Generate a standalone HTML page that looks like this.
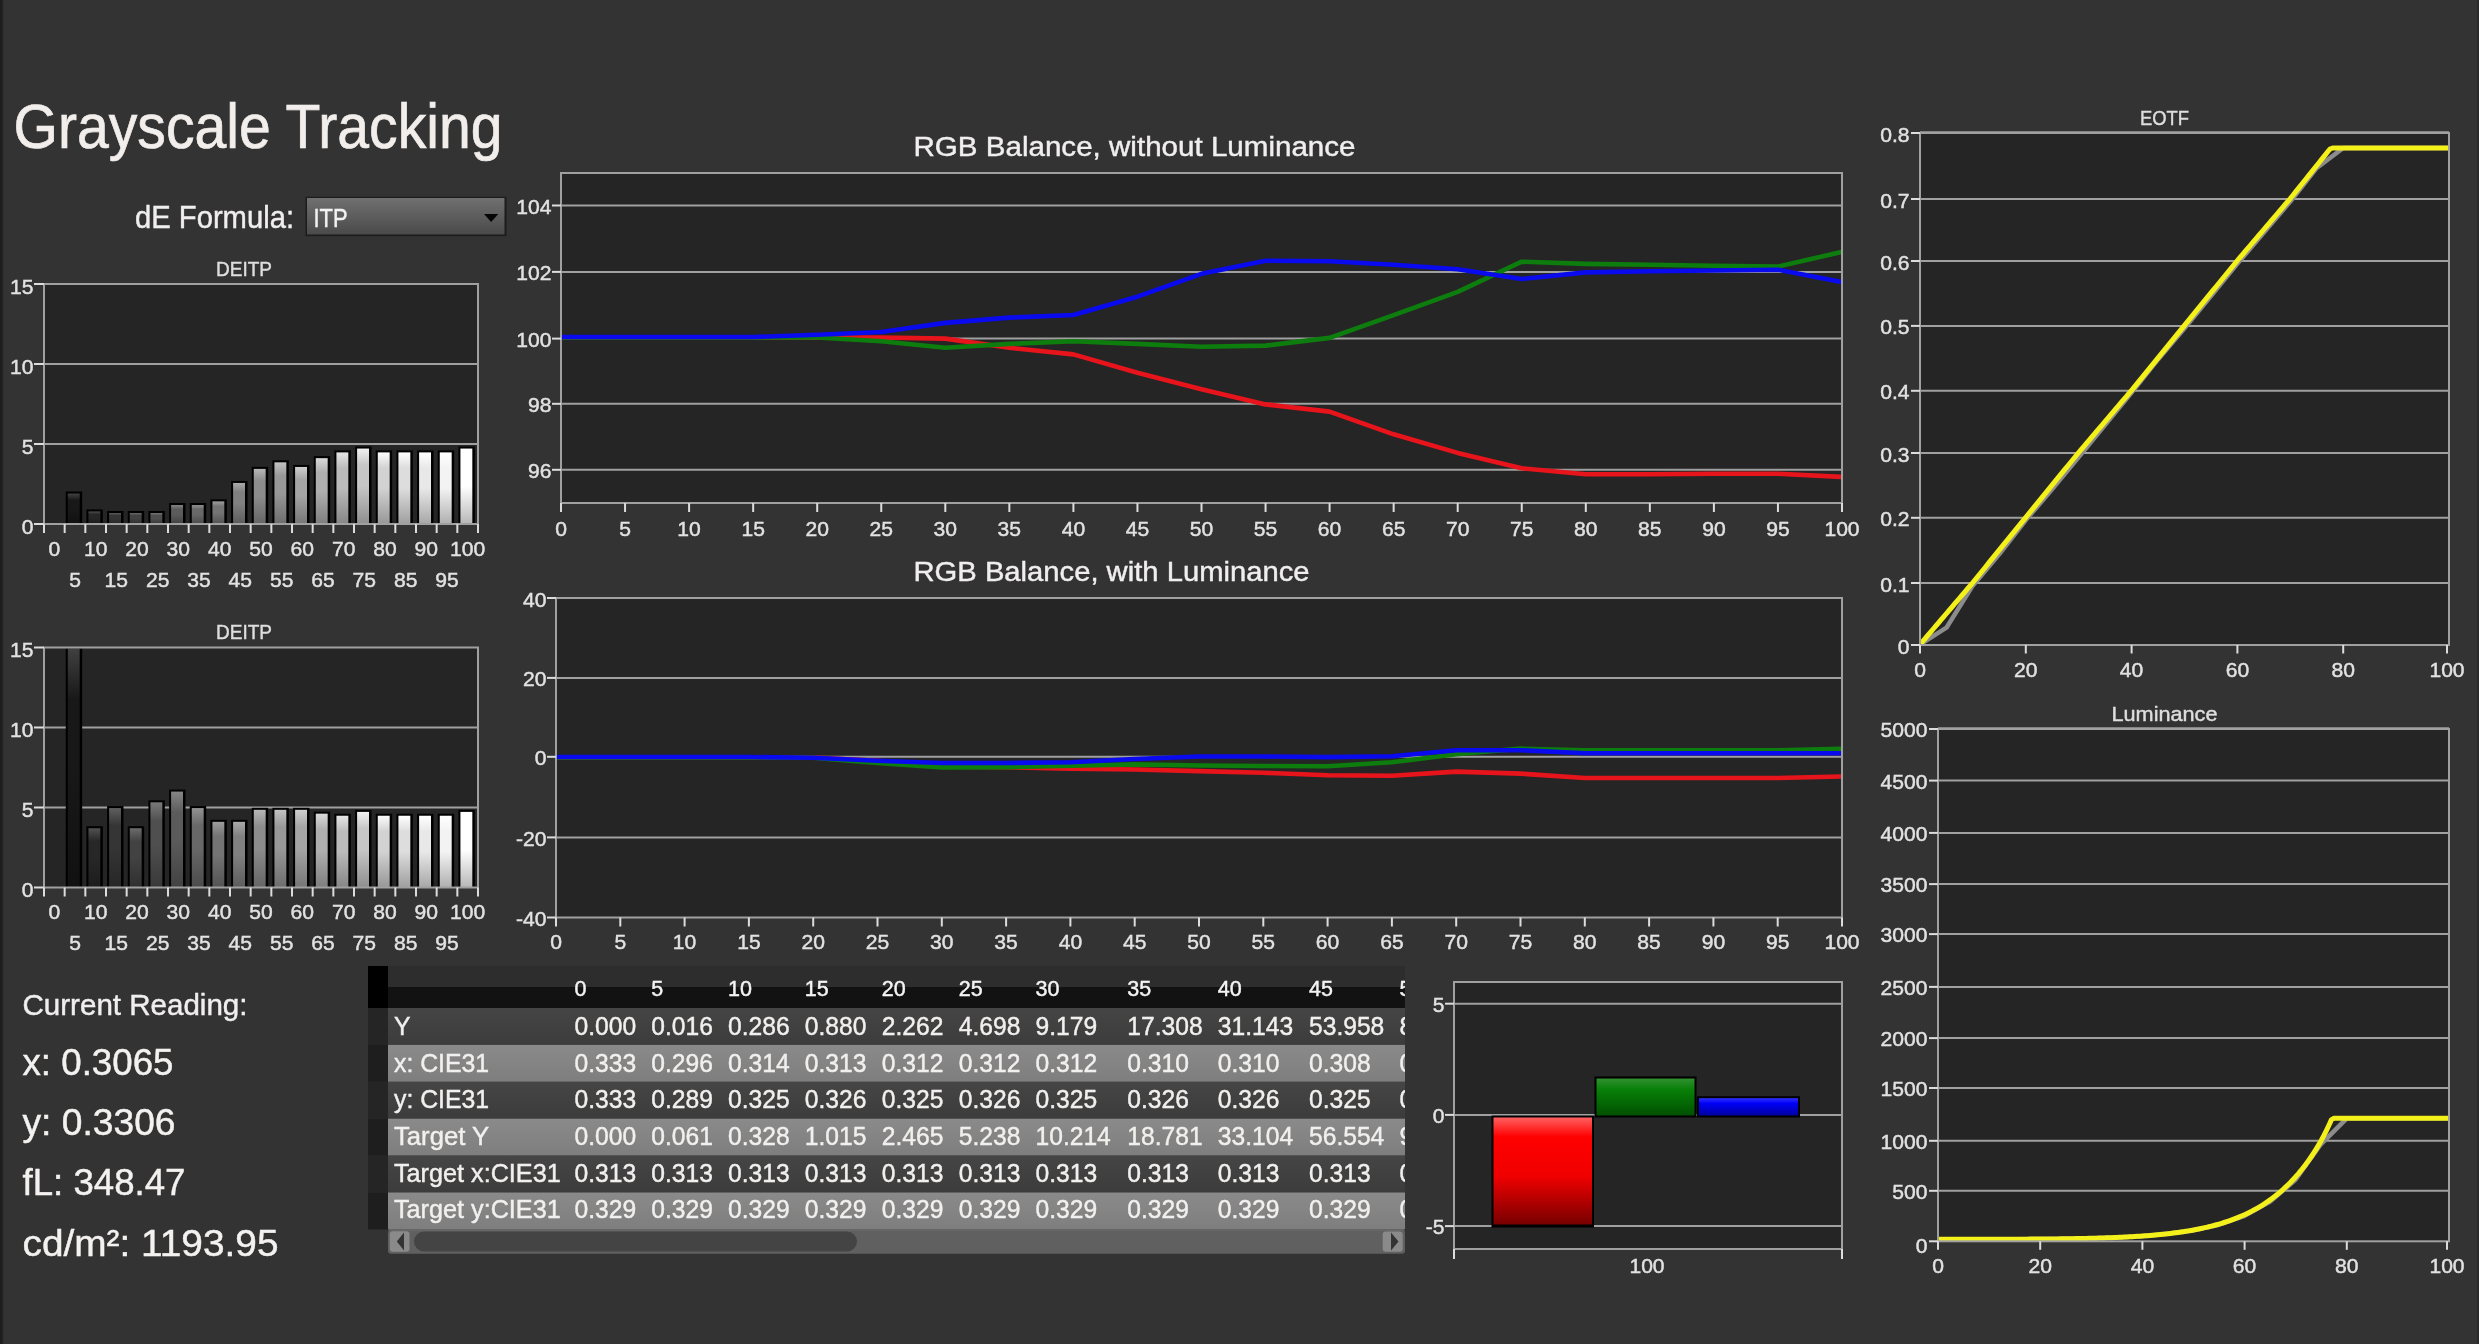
<!DOCTYPE html>
<html><head><meta charset="utf-8"><title>Grayscale Tracking</title>
<style>
html,body{margin:0;padding:0;background:#333333;overflow:hidden;}
svg{display:block;will-change:transform;}
text{font-family:"Liberation Sans", sans-serif;}
</style></head><body>
<svg width="2479" height="1344" viewBox="0 0 2479 1344">
<defs><linearGradient id="lstrip" x1="0" x2="1" y1="0" y2="0"><stop offset="0" stop-color="#1c1c1c"/><stop offset="0.45" stop-color="#1e1e1e"/><stop offset="1" stop-color="#333333"/></linearGradient>
<linearGradient id="ddg" x1="0" x2="0" y1="0" y2="1"><stop offset="0" stop-color="#707070"/><stop offset="1" stop-color="#4a4a4a"/></linearGradient>
<clipPath id="bclip284"><rect x="44.00" y="285.00" width="434.00" height="239.00"/></clipPath>
<linearGradient id="bg284_1" x1="0" x2="0" y1="0" y2="1"><stop offset="0" stop-color="rgb(66,66,66)"/><stop offset="0.22" stop-color="rgb(24,24,24)"/><stop offset="0.5" stop-color="rgb(24,24,24)"/><stop offset="1" stop-color="rgb(17,17,17)"/></linearGradient>
<linearGradient id="bg284_2" x1="0" x2="0" y1="0" y2="1"><stop offset="0" stop-color="rgb(81,81,81)"/><stop offset="0.22" stop-color="rgb(39,39,39)"/><stop offset="0.5" stop-color="rgb(39,39,39)"/><stop offset="1" stop-color="rgb(28,28,28)"/></linearGradient>
<linearGradient id="bg284_3" x1="0" x2="0" y1="0" y2="1"><stop offset="0" stop-color="rgb(95,95,95)"/><stop offset="0.22" stop-color="rgb(53,53,53)"/><stop offset="0.5" stop-color="rgb(53,53,53)"/><stop offset="1" stop-color="rgb(38,38,38)"/></linearGradient>
<linearGradient id="bg284_4" x1="0" x2="0" y1="0" y2="1"><stop offset="0" stop-color="rgb(108,108,108)"/><stop offset="0.22" stop-color="rgb(66,66,66)"/><stop offset="0.5" stop-color="rgb(66,66,66)"/><stop offset="1" stop-color="rgb(47,47,47)"/></linearGradient>
<linearGradient id="bg284_5" x1="0" x2="0" y1="0" y2="1"><stop offset="0" stop-color="rgb(121,121,121)"/><stop offset="0.22" stop-color="rgb(79,79,79)"/><stop offset="0.5" stop-color="rgb(79,79,79)"/><stop offset="1" stop-color="rgb(57,57,57)"/></linearGradient>
<linearGradient id="bg284_6" x1="0" x2="0" y1="0" y2="1"><stop offset="0" stop-color="rgb(133,133,133)"/><stop offset="0.22" stop-color="rgb(91,91,91)"/><stop offset="0.5" stop-color="rgb(91,91,91)"/><stop offset="1" stop-color="rgb(66,66,66)"/></linearGradient>
<linearGradient id="bg284_7" x1="0" x2="0" y1="0" y2="1"><stop offset="0" stop-color="rgb(146,146,146)"/><stop offset="0.22" stop-color="rgb(104,104,104)"/><stop offset="0.5" stop-color="rgb(104,104,104)"/><stop offset="1" stop-color="rgb(75,75,75)"/></linearGradient>
<linearGradient id="bg284_8" x1="0" x2="0" y1="0" y2="1"><stop offset="0" stop-color="rgb(158,158,158)"/><stop offset="0.22" stop-color="rgb(116,116,116)"/><stop offset="0.5" stop-color="rgb(116,116,116)"/><stop offset="1" stop-color="rgb(83,83,83)"/></linearGradient>
<linearGradient id="bg284_9" x1="0" x2="0" y1="0" y2="1"><stop offset="0" stop-color="rgb(170,170,170)"/><stop offset="0.22" stop-color="rgb(128,128,128)"/><stop offset="0.5" stop-color="rgb(128,128,128)"/><stop offset="1" stop-color="rgb(92,92,92)"/></linearGradient>
<linearGradient id="bg284_10" x1="0" x2="0" y1="0" y2="1"><stop offset="0" stop-color="rgb(182,182,182)"/><stop offset="0.22" stop-color="rgb(140,140,140)"/><stop offset="0.5" stop-color="rgb(140,140,140)"/><stop offset="1" stop-color="rgb(101,101,101)"/></linearGradient>
<linearGradient id="bg284_11" x1="0" x2="0" y1="0" y2="1"><stop offset="0" stop-color="rgb(194,194,194)"/><stop offset="0.22" stop-color="rgb(152,152,152)"/><stop offset="0.5" stop-color="rgb(152,152,152)"/><stop offset="1" stop-color="rgb(109,109,109)"/></linearGradient>
<linearGradient id="bg284_12" x1="0" x2="0" y1="0" y2="1"><stop offset="0" stop-color="rgb(206,206,206)"/><stop offset="0.22" stop-color="rgb(164,164,164)"/><stop offset="0.5" stop-color="rgb(164,164,164)"/><stop offset="1" stop-color="rgb(118,118,118)"/></linearGradient>
<linearGradient id="bg284_13" x1="0" x2="0" y1="0" y2="1"><stop offset="0" stop-color="rgb(217,217,217)"/><stop offset="0.22" stop-color="rgb(175,175,175)"/><stop offset="0.5" stop-color="rgb(175,175,175)"/><stop offset="1" stop-color="rgb(126,126,126)"/></linearGradient>
<linearGradient id="bg284_14" x1="0" x2="0" y1="0" y2="1"><stop offset="0" stop-color="rgb(229,229,229)"/><stop offset="0.22" stop-color="rgb(187,187,187)"/><stop offset="0.5" stop-color="rgb(187,187,187)"/><stop offset="1" stop-color="rgb(134,134,134)"/></linearGradient>
<linearGradient id="bg284_15" x1="0" x2="0" y1="0" y2="1"><stop offset="0" stop-color="rgb(240,240,240)"/><stop offset="0.22" stop-color="rgb(198,198,198)"/><stop offset="0.5" stop-color="rgb(198,198,198)"/><stop offset="1" stop-color="rgb(143,143,143)"/></linearGradient>
<linearGradient id="bg284_16" x1="0" x2="0" y1="0" y2="1"><stop offset="0" stop-color="rgb(252,252,252)"/><stop offset="0.22" stop-color="rgb(210,210,210)"/><stop offset="0.5" stop-color="rgb(210,210,210)"/><stop offset="1" stop-color="rgb(151,151,151)"/></linearGradient>
<linearGradient id="bg284_17" x1="0" x2="0" y1="0" y2="1"><stop offset="0" stop-color="rgb(255,255,255)"/><stop offset="0.22" stop-color="rgb(221,221,221)"/><stop offset="0.5" stop-color="rgb(221,221,221)"/><stop offset="1" stop-color="rgb(159,159,159)"/></linearGradient>
<linearGradient id="bg284_18" x1="0" x2="0" y1="0" y2="1"><stop offset="0" stop-color="rgb(255,255,255)"/><stop offset="0.22" stop-color="rgb(232,232,232)"/><stop offset="0.5" stop-color="rgb(232,232,232)"/><stop offset="1" stop-color="rgb(167,167,167)"/></linearGradient>
<linearGradient id="bg284_19" x1="0" x2="0" y1="0" y2="1"><stop offset="0" stop-color="rgb(255,255,255)"/><stop offset="0.22" stop-color="rgb(243,243,243)"/><stop offset="0.5" stop-color="rgb(243,243,243)"/><stop offset="1" stop-color="rgb(175,175,175)"/></linearGradient>
<linearGradient id="bg284_20" x1="0" x2="0" y1="0" y2="1"><stop offset="0" stop-color="rgb(255,255,255)"/><stop offset="0.22" stop-color="rgb(255,255,255)"/><stop offset="0.5" stop-color="rgb(255,255,255)"/><stop offset="1" stop-color="rgb(183,183,183)"/></linearGradient>
<clipPath id="bclip647"><rect x="44.00" y="648.50" width="434.00" height="239.00"/></clipPath>
<linearGradient id="bg647_1" x1="0" x2="0" y1="0" y2="1"><stop offset="0" stop-color="rgb(66,66,66)"/><stop offset="0.22" stop-color="rgb(24,24,24)"/><stop offset="0.5" stop-color="rgb(24,24,24)"/><stop offset="1" stop-color="rgb(17,17,17)"/></linearGradient>
<linearGradient id="bg647_2" x1="0" x2="0" y1="0" y2="1"><stop offset="0" stop-color="rgb(81,81,81)"/><stop offset="0.22" stop-color="rgb(39,39,39)"/><stop offset="0.5" stop-color="rgb(39,39,39)"/><stop offset="1" stop-color="rgb(28,28,28)"/></linearGradient>
<linearGradient id="bg647_3" x1="0" x2="0" y1="0" y2="1"><stop offset="0" stop-color="rgb(95,95,95)"/><stop offset="0.22" stop-color="rgb(53,53,53)"/><stop offset="0.5" stop-color="rgb(53,53,53)"/><stop offset="1" stop-color="rgb(38,38,38)"/></linearGradient>
<linearGradient id="bg647_4" x1="0" x2="0" y1="0" y2="1"><stop offset="0" stop-color="rgb(108,108,108)"/><stop offset="0.22" stop-color="rgb(66,66,66)"/><stop offset="0.5" stop-color="rgb(66,66,66)"/><stop offset="1" stop-color="rgb(47,47,47)"/></linearGradient>
<linearGradient id="bg647_5" x1="0" x2="0" y1="0" y2="1"><stop offset="0" stop-color="rgb(121,121,121)"/><stop offset="0.22" stop-color="rgb(79,79,79)"/><stop offset="0.5" stop-color="rgb(79,79,79)"/><stop offset="1" stop-color="rgb(57,57,57)"/></linearGradient>
<linearGradient id="bg647_6" x1="0" x2="0" y1="0" y2="1"><stop offset="0" stop-color="rgb(133,133,133)"/><stop offset="0.22" stop-color="rgb(91,91,91)"/><stop offset="0.5" stop-color="rgb(91,91,91)"/><stop offset="1" stop-color="rgb(66,66,66)"/></linearGradient>
<linearGradient id="bg647_7" x1="0" x2="0" y1="0" y2="1"><stop offset="0" stop-color="rgb(146,146,146)"/><stop offset="0.22" stop-color="rgb(104,104,104)"/><stop offset="0.5" stop-color="rgb(104,104,104)"/><stop offset="1" stop-color="rgb(75,75,75)"/></linearGradient>
<linearGradient id="bg647_8" x1="0" x2="0" y1="0" y2="1"><stop offset="0" stop-color="rgb(158,158,158)"/><stop offset="0.22" stop-color="rgb(116,116,116)"/><stop offset="0.5" stop-color="rgb(116,116,116)"/><stop offset="1" stop-color="rgb(83,83,83)"/></linearGradient>
<linearGradient id="bg647_9" x1="0" x2="0" y1="0" y2="1"><stop offset="0" stop-color="rgb(170,170,170)"/><stop offset="0.22" stop-color="rgb(128,128,128)"/><stop offset="0.5" stop-color="rgb(128,128,128)"/><stop offset="1" stop-color="rgb(92,92,92)"/></linearGradient>
<linearGradient id="bg647_10" x1="0" x2="0" y1="0" y2="1"><stop offset="0" stop-color="rgb(182,182,182)"/><stop offset="0.22" stop-color="rgb(140,140,140)"/><stop offset="0.5" stop-color="rgb(140,140,140)"/><stop offset="1" stop-color="rgb(101,101,101)"/></linearGradient>
<linearGradient id="bg647_11" x1="0" x2="0" y1="0" y2="1"><stop offset="0" stop-color="rgb(194,194,194)"/><stop offset="0.22" stop-color="rgb(152,152,152)"/><stop offset="0.5" stop-color="rgb(152,152,152)"/><stop offset="1" stop-color="rgb(109,109,109)"/></linearGradient>
<linearGradient id="bg647_12" x1="0" x2="0" y1="0" y2="1"><stop offset="0" stop-color="rgb(206,206,206)"/><stop offset="0.22" stop-color="rgb(164,164,164)"/><stop offset="0.5" stop-color="rgb(164,164,164)"/><stop offset="1" stop-color="rgb(118,118,118)"/></linearGradient>
<linearGradient id="bg647_13" x1="0" x2="0" y1="0" y2="1"><stop offset="0" stop-color="rgb(217,217,217)"/><stop offset="0.22" stop-color="rgb(175,175,175)"/><stop offset="0.5" stop-color="rgb(175,175,175)"/><stop offset="1" stop-color="rgb(126,126,126)"/></linearGradient>
<linearGradient id="bg647_14" x1="0" x2="0" y1="0" y2="1"><stop offset="0" stop-color="rgb(229,229,229)"/><stop offset="0.22" stop-color="rgb(187,187,187)"/><stop offset="0.5" stop-color="rgb(187,187,187)"/><stop offset="1" stop-color="rgb(134,134,134)"/></linearGradient>
<linearGradient id="bg647_15" x1="0" x2="0" y1="0" y2="1"><stop offset="0" stop-color="rgb(240,240,240)"/><stop offset="0.22" stop-color="rgb(198,198,198)"/><stop offset="0.5" stop-color="rgb(198,198,198)"/><stop offset="1" stop-color="rgb(143,143,143)"/></linearGradient>
<linearGradient id="bg647_16" x1="0" x2="0" y1="0" y2="1"><stop offset="0" stop-color="rgb(252,252,252)"/><stop offset="0.22" stop-color="rgb(210,210,210)"/><stop offset="0.5" stop-color="rgb(210,210,210)"/><stop offset="1" stop-color="rgb(151,151,151)"/></linearGradient>
<linearGradient id="bg647_17" x1="0" x2="0" y1="0" y2="1"><stop offset="0" stop-color="rgb(255,255,255)"/><stop offset="0.22" stop-color="rgb(221,221,221)"/><stop offset="0.5" stop-color="rgb(221,221,221)"/><stop offset="1" stop-color="rgb(159,159,159)"/></linearGradient>
<linearGradient id="bg647_18" x1="0" x2="0" y1="0" y2="1"><stop offset="0" stop-color="rgb(255,255,255)"/><stop offset="0.22" stop-color="rgb(232,232,232)"/><stop offset="0.5" stop-color="rgb(232,232,232)"/><stop offset="1" stop-color="rgb(167,167,167)"/></linearGradient>
<linearGradient id="bg647_19" x1="0" x2="0" y1="0" y2="1"><stop offset="0" stop-color="rgb(255,255,255)"/><stop offset="0.22" stop-color="rgb(243,243,243)"/><stop offset="0.5" stop-color="rgb(243,243,243)"/><stop offset="1" stop-color="rgb(175,175,175)"/></linearGradient>
<linearGradient id="bg647_20" x1="0" x2="0" y1="0" y2="1"><stop offset="0" stop-color="rgb(255,255,255)"/><stop offset="0.22" stop-color="rgb(255,255,255)"/><stop offset="0.5" stop-color="rgb(255,255,255)"/><stop offset="1" stop-color="rgb(183,183,183)"/></linearGradient>
<clipPath id="clip173"><rect x="562.00" y="174.00" width="1279.00" height="328.00"/></clipPath>
<clipPath id="clip598"><rect x="557.00" y="599.00" width="1284.00" height="317.50"/></clipPath>
<clipPath id="eclip"><rect x="1921.00" y="134.00" width="527.00" height="511.00"/></clipPath>
<clipPath id="lclip"><rect x="1939.00" y="730.00" width="509.00" height="511.30"/></clipPath>
<linearGradient id="rg" x1="0" x2="0" y1="0" y2="1"><stop offset="0" stop-color="#ff6060"/><stop offset="0.18" stop-color="#ff0000"/><stop offset="0.55" stop-color="#f00000"/><stop offset="1" stop-color="#780000"/></linearGradient>
<linearGradient id="gg" x1="0" x2="0" y1="0" y2="1"><stop offset="0" stop-color="#309030"/><stop offset="0.3" stop-color="#088008"/><stop offset="1" stop-color="#005000"/></linearGradient>
<linearGradient id="bbg" x1="0" x2="0" y1="0" y2="1"><stop offset="0" stop-color="#3030ff"/><stop offset="0.3" stop-color="#0000f8"/><stop offset="1" stop-color="#0000a0"/></linearGradient>
<clipPath id="tclip"><rect x="388" y="960" width="1017" height="300"/></clipPath>
<linearGradient id="rowd" x1="0" x2="0" y1="0" y2="1"><stop offset="0" stop-color="#454545"/><stop offset="1" stop-color="#3c3c3c"/></linearGradient>
<linearGradient id="rowl" x1="0" x2="0" y1="0" y2="1"><stop offset="0" stop-color="#8a8a8a"/><stop offset="1" stop-color="#7e7e7e"/></linearGradient></defs>
<rect x="0.00" y="0.00" width="2479.00" height="1344.00" fill="#333333"/>
<rect x="0.00" y="0.00" width="4.00" height="1344.00" fill="url(#lstrip)"/>
<rect x="2477.00" y="0.00" width="2.00" height="1344.00" fill="#2a2a2a"/>
<text x="13.50" y="148.30" font-size="62.50" fill="#f2eeec" text-anchor="start" textLength="489.0" lengthAdjust="spacingAndGlyphs" stroke="#f2eeec" stroke-width="0.70">Grayscale Tracking</text>
<text x="135.00" y="228.00" font-size="31.98" fill="#f0eeee" text-anchor="start" textLength="159.0" lengthAdjust="spacingAndGlyphs" stroke="#f0eeee" stroke-width="0.45">dE Formula:</text>
<rect x="305.50" y="196.80" width="201.00" height="39.30" fill="#1c1c1c"/>
<rect x="307.00" y="198.00" width="197.50" height="36.50" fill="url(#ddg)"/>
<text x="313.50" y="226.50" font-size="25.44" fill="#f2f2f2" text-anchor="start" textLength="34.0" lengthAdjust="spacingAndGlyphs" stroke="#f2f2f2" stroke-width="0.45">ITP</text>
<polygon points="484,214 498.3,214 491.1,222" fill="#050505"/>
<rect x="44.00" y="284.00" width="434.00" height="240.00" fill="#252525"/>
<line x1="44.00" y1="444.00" x2="478.00" y2="444.00" stroke="#a0a0a0" stroke-width="2.00"/>
<line x1="44.00" y1="364.00" x2="478.00" y2="364.00" stroke="#a0a0a0" stroke-width="2.00"/>
<g clip-path="url(#bclip284)">
<rect x="65.77" y="491.52" width="16.40" height="32.48" fill="#000000"/>
<rect x="67.77" y="493.52" width="11.90" height="30.48" fill="url(#bg284_1)"/>
<rect x="86.43" y="509.44" width="16.40" height="14.56" fill="#000000"/>
<rect x="88.43" y="511.44" width="11.90" height="12.56" fill="url(#bg284_2)"/>
<rect x="107.10" y="511.04" width="16.40" height="12.96" fill="#000000"/>
<rect x="109.10" y="513.04" width="11.90" height="10.96" fill="url(#bg284_3)"/>
<rect x="127.77" y="511.04" width="16.40" height="12.96" fill="#000000"/>
<rect x="129.77" y="513.04" width="11.90" height="10.96" fill="url(#bg284_4)"/>
<rect x="148.43" y="511.04" width="16.40" height="12.96" fill="#000000"/>
<rect x="150.43" y="513.04" width="11.90" height="10.96" fill="url(#bg284_5)"/>
<rect x="169.10" y="503.04" width="16.40" height="20.96" fill="#000000"/>
<rect x="171.10" y="505.04" width="11.90" height="18.96" fill="url(#bg284_6)"/>
<rect x="189.77" y="503.04" width="16.40" height="20.96" fill="#000000"/>
<rect x="191.77" y="505.04" width="11.90" height="18.96" fill="url(#bg284_7)"/>
<rect x="210.43" y="499.36" width="16.40" height="24.64" fill="#000000"/>
<rect x="212.43" y="501.36" width="11.90" height="22.64" fill="url(#bg284_8)"/>
<rect x="231.10" y="480.96" width="16.40" height="43.04" fill="#000000"/>
<rect x="233.10" y="482.96" width="11.90" height="41.04" fill="url(#bg284_9)"/>
<rect x="251.77" y="466.88" width="16.40" height="57.12" fill="#000000"/>
<rect x="253.77" y="468.88" width="11.90" height="55.12" fill="url(#bg284_10)"/>
<rect x="272.43" y="460.32" width="16.40" height="63.68" fill="#000000"/>
<rect x="274.43" y="462.32" width="11.90" height="61.68" fill="url(#bg284_11)"/>
<rect x="293.10" y="464.96" width="16.40" height="59.04" fill="#000000"/>
<rect x="295.10" y="466.96" width="11.90" height="57.04" fill="url(#bg284_12)"/>
<rect x="313.77" y="456.16" width="16.40" height="67.84" fill="#000000"/>
<rect x="315.77" y="458.16" width="11.90" height="65.84" fill="url(#bg284_13)"/>
<rect x="334.43" y="450.40" width="16.40" height="73.60" fill="#000000"/>
<rect x="336.43" y="452.40" width="11.90" height="71.60" fill="url(#bg284_14)"/>
<rect x="355.10" y="446.56" width="16.40" height="77.44" fill="#000000"/>
<rect x="357.10" y="448.56" width="11.90" height="75.44" fill="url(#bg284_15)"/>
<rect x="375.77" y="450.40" width="16.40" height="73.60" fill="#000000"/>
<rect x="377.77" y="452.40" width="11.90" height="71.60" fill="url(#bg284_16)"/>
<rect x="396.43" y="450.40" width="16.40" height="73.60" fill="#000000"/>
<rect x="398.43" y="452.40" width="11.90" height="71.60" fill="url(#bg284_17)"/>
<rect x="417.10" y="450.40" width="16.40" height="73.60" fill="#000000"/>
<rect x="419.10" y="452.40" width="11.90" height="71.60" fill="url(#bg284_18)"/>
<rect x="437.77" y="450.40" width="16.40" height="73.60" fill="#000000"/>
<rect x="439.77" y="452.40" width="11.90" height="71.60" fill="url(#bg284_19)"/>
<rect x="458.43" y="446.56" width="16.40" height="77.44" fill="#000000"/>
<rect x="460.43" y="448.56" width="11.90" height="75.44" fill="url(#bg284_20)"/>
</g>
<rect x="44.00" y="284.00" width="434.00" height="240.00" fill="none" stroke="#a0a0a0" stroke-width="2"/>
<line x1="34.00" y1="524.00" x2="44.00" y2="524.00" stroke="#dcdcdc" stroke-width="2.00"/>
<text x="33.50" y="533.50" font-size="21.08" fill="#e2e2e2" text-anchor="end" stroke="#e2e2e2" stroke-width="0.45">0</text>
<line x1="34.00" y1="444.00" x2="44.00" y2="444.00" stroke="#dcdcdc" stroke-width="2.00"/>
<text x="33.50" y="453.50" font-size="21.08" fill="#e2e2e2" text-anchor="end" stroke="#e2e2e2" stroke-width="0.45">5</text>
<line x1="34.00" y1="364.00" x2="44.00" y2="364.00" stroke="#dcdcdc" stroke-width="2.00"/>
<text x="33.50" y="373.50" font-size="21.08" fill="#e2e2e2" text-anchor="end" stroke="#e2e2e2" stroke-width="0.45">10</text>
<line x1="34.00" y1="284.00" x2="44.00" y2="284.00" stroke="#dcdcdc" stroke-width="2.00"/>
<text x="33.50" y="293.50" font-size="21.08" fill="#e2e2e2" text-anchor="end" stroke="#e2e2e2" stroke-width="0.45">15</text>
<line x1="44.00" y1="524.00" x2="44.00" y2="533.00" stroke="#dcdcdc" stroke-width="2.00"/>
<line x1="64.67" y1="524.00" x2="64.67" y2="533.00" stroke="#dcdcdc" stroke-width="2.00"/>
<line x1="85.33" y1="524.00" x2="85.33" y2="533.00" stroke="#dcdcdc" stroke-width="2.00"/>
<line x1="106.00" y1="524.00" x2="106.00" y2="533.00" stroke="#dcdcdc" stroke-width="2.00"/>
<line x1="126.67" y1="524.00" x2="126.67" y2="533.00" stroke="#dcdcdc" stroke-width="2.00"/>
<line x1="147.33" y1="524.00" x2="147.33" y2="533.00" stroke="#dcdcdc" stroke-width="2.00"/>
<line x1="168.00" y1="524.00" x2="168.00" y2="533.00" stroke="#dcdcdc" stroke-width="2.00"/>
<line x1="188.67" y1="524.00" x2="188.67" y2="533.00" stroke="#dcdcdc" stroke-width="2.00"/>
<line x1="209.33" y1="524.00" x2="209.33" y2="533.00" stroke="#dcdcdc" stroke-width="2.00"/>
<line x1="230.00" y1="524.00" x2="230.00" y2="533.00" stroke="#dcdcdc" stroke-width="2.00"/>
<line x1="250.67" y1="524.00" x2="250.67" y2="533.00" stroke="#dcdcdc" stroke-width="2.00"/>
<line x1="271.33" y1="524.00" x2="271.33" y2="533.00" stroke="#dcdcdc" stroke-width="2.00"/>
<line x1="292.00" y1="524.00" x2="292.00" y2="533.00" stroke="#dcdcdc" stroke-width="2.00"/>
<line x1="312.67" y1="524.00" x2="312.67" y2="533.00" stroke="#dcdcdc" stroke-width="2.00"/>
<line x1="333.33" y1="524.00" x2="333.33" y2="533.00" stroke="#dcdcdc" stroke-width="2.00"/>
<line x1="354.00" y1="524.00" x2="354.00" y2="533.00" stroke="#dcdcdc" stroke-width="2.00"/>
<line x1="374.67" y1="524.00" x2="374.67" y2="533.00" stroke="#dcdcdc" stroke-width="2.00"/>
<line x1="395.33" y1="524.00" x2="395.33" y2="533.00" stroke="#dcdcdc" stroke-width="2.00"/>
<line x1="416.00" y1="524.00" x2="416.00" y2="533.00" stroke="#dcdcdc" stroke-width="2.00"/>
<line x1="436.67" y1="524.00" x2="436.67" y2="533.00" stroke="#dcdcdc" stroke-width="2.00"/>
<line x1="457.33" y1="524.00" x2="457.33" y2="533.00" stroke="#dcdcdc" stroke-width="2.00"/>
<line x1="478.00" y1="524.00" x2="478.00" y2="533.00" stroke="#dcdcdc" stroke-width="2.00"/>
<text x="54.33" y="555.50" font-size="21.08" fill="#e2e2e2" text-anchor="middle" stroke="#e2e2e2" stroke-width="0.45">0</text>
<text x="75.00" y="586.50" font-size="21.08" fill="#e2e2e2" text-anchor="middle" stroke="#e2e2e2" stroke-width="0.45">5</text>
<text x="95.67" y="555.50" font-size="21.08" fill="#e2e2e2" text-anchor="middle" stroke="#e2e2e2" stroke-width="0.45">10</text>
<text x="116.33" y="586.50" font-size="21.08" fill="#e2e2e2" text-anchor="middle" stroke="#e2e2e2" stroke-width="0.45">15</text>
<text x="137.00" y="555.50" font-size="21.08" fill="#e2e2e2" text-anchor="middle" stroke="#e2e2e2" stroke-width="0.45">20</text>
<text x="157.67" y="586.50" font-size="21.08" fill="#e2e2e2" text-anchor="middle" stroke="#e2e2e2" stroke-width="0.45">25</text>
<text x="178.33" y="555.50" font-size="21.08" fill="#e2e2e2" text-anchor="middle" stroke="#e2e2e2" stroke-width="0.45">30</text>
<text x="199.00" y="586.50" font-size="21.08" fill="#e2e2e2" text-anchor="middle" stroke="#e2e2e2" stroke-width="0.45">35</text>
<text x="219.67" y="555.50" font-size="21.08" fill="#e2e2e2" text-anchor="middle" stroke="#e2e2e2" stroke-width="0.45">40</text>
<text x="240.33" y="586.50" font-size="21.08" fill="#e2e2e2" text-anchor="middle" stroke="#e2e2e2" stroke-width="0.45">45</text>
<text x="261.00" y="555.50" font-size="21.08" fill="#e2e2e2" text-anchor="middle" stroke="#e2e2e2" stroke-width="0.45">50</text>
<text x="281.67" y="586.50" font-size="21.08" fill="#e2e2e2" text-anchor="middle" stroke="#e2e2e2" stroke-width="0.45">55</text>
<text x="302.33" y="555.50" font-size="21.08" fill="#e2e2e2" text-anchor="middle" stroke="#e2e2e2" stroke-width="0.45">60</text>
<text x="323.00" y="586.50" font-size="21.08" fill="#e2e2e2" text-anchor="middle" stroke="#e2e2e2" stroke-width="0.45">65</text>
<text x="343.67" y="555.50" font-size="21.08" fill="#e2e2e2" text-anchor="middle" stroke="#e2e2e2" stroke-width="0.45">70</text>
<text x="364.33" y="586.50" font-size="21.08" fill="#e2e2e2" text-anchor="middle" stroke="#e2e2e2" stroke-width="0.45">75</text>
<text x="385.00" y="555.50" font-size="21.08" fill="#e2e2e2" text-anchor="middle" stroke="#e2e2e2" stroke-width="0.45">80</text>
<text x="405.67" y="586.50" font-size="21.08" fill="#e2e2e2" text-anchor="middle" stroke="#e2e2e2" stroke-width="0.45">85</text>
<text x="426.33" y="555.50" font-size="21.08" fill="#e2e2e2" text-anchor="middle" stroke="#e2e2e2" stroke-width="0.45">90</text>
<text x="447.00" y="586.50" font-size="21.08" fill="#e2e2e2" text-anchor="middle" stroke="#e2e2e2" stroke-width="0.45">95</text>
<text x="467.67" y="555.50" font-size="21.08" fill="#e2e2e2" text-anchor="middle" stroke="#e2e2e2" stroke-width="0.45">100</text>
<text x="244.00" y="275.50" font-size="20.35" fill="#dedede" text-anchor="middle" textLength="56.0" lengthAdjust="spacingAndGlyphs" stroke="#dedede" stroke-width="0.45">DEITP</text>
<rect x="44.00" y="647.50" width="434.00" height="240.00" fill="#252525"/>
<line x1="44.00" y1="807.50" x2="478.00" y2="807.50" stroke="#a0a0a0" stroke-width="2.00"/>
<line x1="44.00" y1="727.50" x2="478.00" y2="727.50" stroke="#a0a0a0" stroke-width="2.00"/>
<g clip-path="url(#bclip647)">
<rect x="65.77" y="644.50" width="16.40" height="243.00" fill="#000000"/>
<rect x="67.77" y="646.50" width="11.90" height="241.00" fill="url(#bg647_1)"/>
<rect x="86.43" y="826.22" width="16.40" height="61.28" fill="#000000"/>
<rect x="88.43" y="828.22" width="11.90" height="59.28" fill="url(#bg647_2)"/>
<rect x="107.10" y="806.06" width="16.40" height="81.44" fill="#000000"/>
<rect x="109.10" y="808.06" width="11.90" height="79.44" fill="url(#bg647_3)"/>
<rect x="127.77" y="826.22" width="16.40" height="61.28" fill="#000000"/>
<rect x="129.77" y="828.22" width="11.90" height="59.28" fill="url(#bg647_4)"/>
<rect x="148.43" y="800.30" width="16.40" height="87.20" fill="#000000"/>
<rect x="150.43" y="802.30" width="11.90" height="85.20" fill="url(#bg647_5)"/>
<rect x="169.10" y="789.58" width="16.40" height="97.92" fill="#000000"/>
<rect x="171.10" y="791.58" width="11.90" height="95.92" fill="url(#bg647_6)"/>
<rect x="189.77" y="806.06" width="16.40" height="81.44" fill="#000000"/>
<rect x="191.77" y="808.06" width="11.90" height="79.44" fill="url(#bg647_7)"/>
<rect x="210.43" y="819.82" width="16.40" height="67.68" fill="#000000"/>
<rect x="212.43" y="821.82" width="11.90" height="65.68" fill="url(#bg647_8)"/>
<rect x="231.10" y="819.82" width="16.40" height="67.68" fill="#000000"/>
<rect x="233.10" y="821.82" width="11.90" height="65.68" fill="url(#bg647_9)"/>
<rect x="251.77" y="807.82" width="16.40" height="79.68" fill="#000000"/>
<rect x="253.77" y="809.82" width="11.90" height="77.68" fill="url(#bg647_10)"/>
<rect x="272.43" y="807.82" width="16.40" height="79.68" fill="#000000"/>
<rect x="274.43" y="809.82" width="11.90" height="77.68" fill="url(#bg647_11)"/>
<rect x="293.10" y="807.82" width="16.40" height="79.68" fill="#000000"/>
<rect x="295.10" y="809.82" width="11.90" height="77.68" fill="url(#bg647_12)"/>
<rect x="313.77" y="811.66" width="16.40" height="75.84" fill="#000000"/>
<rect x="315.77" y="813.66" width="11.90" height="73.84" fill="url(#bg647_13)"/>
<rect x="334.43" y="813.74" width="16.40" height="73.76" fill="#000000"/>
<rect x="336.43" y="815.74" width="11.90" height="71.76" fill="url(#bg647_14)"/>
<rect x="355.10" y="809.90" width="16.40" height="77.60" fill="#000000"/>
<rect x="357.10" y="811.90" width="11.90" height="75.60" fill="url(#bg647_15)"/>
<rect x="375.77" y="813.74" width="16.40" height="73.76" fill="#000000"/>
<rect x="377.77" y="815.74" width="11.90" height="71.76" fill="url(#bg647_16)"/>
<rect x="396.43" y="813.74" width="16.40" height="73.76" fill="#000000"/>
<rect x="398.43" y="815.74" width="11.90" height="71.76" fill="url(#bg647_17)"/>
<rect x="417.10" y="813.74" width="16.40" height="73.76" fill="#000000"/>
<rect x="419.10" y="815.74" width="11.90" height="71.76" fill="url(#bg647_18)"/>
<rect x="437.77" y="813.74" width="16.40" height="73.76" fill="#000000"/>
<rect x="439.77" y="815.74" width="11.90" height="71.76" fill="url(#bg647_19)"/>
<rect x="458.43" y="809.90" width="16.40" height="77.60" fill="#000000"/>
<rect x="460.43" y="811.90" width="11.90" height="75.60" fill="url(#bg647_20)"/>
</g>
<rect x="44.00" y="647.50" width="434.00" height="240.00" fill="none" stroke="#a0a0a0" stroke-width="2"/>
<line x1="34.00" y1="887.50" x2="44.00" y2="887.50" stroke="#dcdcdc" stroke-width="2.00"/>
<text x="33.50" y="897.00" font-size="21.08" fill="#e2e2e2" text-anchor="end" stroke="#e2e2e2" stroke-width="0.45">0</text>
<line x1="34.00" y1="807.50" x2="44.00" y2="807.50" stroke="#dcdcdc" stroke-width="2.00"/>
<text x="33.50" y="817.00" font-size="21.08" fill="#e2e2e2" text-anchor="end" stroke="#e2e2e2" stroke-width="0.45">5</text>
<line x1="34.00" y1="727.50" x2="44.00" y2="727.50" stroke="#dcdcdc" stroke-width="2.00"/>
<text x="33.50" y="737.00" font-size="21.08" fill="#e2e2e2" text-anchor="end" stroke="#e2e2e2" stroke-width="0.45">10</text>
<line x1="34.00" y1="647.50" x2="44.00" y2="647.50" stroke="#dcdcdc" stroke-width="2.00"/>
<text x="33.50" y="657.00" font-size="21.08" fill="#e2e2e2" text-anchor="end" stroke="#e2e2e2" stroke-width="0.45">15</text>
<line x1="44.00" y1="887.50" x2="44.00" y2="896.50" stroke="#dcdcdc" stroke-width="2.00"/>
<line x1="64.67" y1="887.50" x2="64.67" y2="896.50" stroke="#dcdcdc" stroke-width="2.00"/>
<line x1="85.33" y1="887.50" x2="85.33" y2="896.50" stroke="#dcdcdc" stroke-width="2.00"/>
<line x1="106.00" y1="887.50" x2="106.00" y2="896.50" stroke="#dcdcdc" stroke-width="2.00"/>
<line x1="126.67" y1="887.50" x2="126.67" y2="896.50" stroke="#dcdcdc" stroke-width="2.00"/>
<line x1="147.33" y1="887.50" x2="147.33" y2="896.50" stroke="#dcdcdc" stroke-width="2.00"/>
<line x1="168.00" y1="887.50" x2="168.00" y2="896.50" stroke="#dcdcdc" stroke-width="2.00"/>
<line x1="188.67" y1="887.50" x2="188.67" y2="896.50" stroke="#dcdcdc" stroke-width="2.00"/>
<line x1="209.33" y1="887.50" x2="209.33" y2="896.50" stroke="#dcdcdc" stroke-width="2.00"/>
<line x1="230.00" y1="887.50" x2="230.00" y2="896.50" stroke="#dcdcdc" stroke-width="2.00"/>
<line x1="250.67" y1="887.50" x2="250.67" y2="896.50" stroke="#dcdcdc" stroke-width="2.00"/>
<line x1="271.33" y1="887.50" x2="271.33" y2="896.50" stroke="#dcdcdc" stroke-width="2.00"/>
<line x1="292.00" y1="887.50" x2="292.00" y2="896.50" stroke="#dcdcdc" stroke-width="2.00"/>
<line x1="312.67" y1="887.50" x2="312.67" y2="896.50" stroke="#dcdcdc" stroke-width="2.00"/>
<line x1="333.33" y1="887.50" x2="333.33" y2="896.50" stroke="#dcdcdc" stroke-width="2.00"/>
<line x1="354.00" y1="887.50" x2="354.00" y2="896.50" stroke="#dcdcdc" stroke-width="2.00"/>
<line x1="374.67" y1="887.50" x2="374.67" y2="896.50" stroke="#dcdcdc" stroke-width="2.00"/>
<line x1="395.33" y1="887.50" x2="395.33" y2="896.50" stroke="#dcdcdc" stroke-width="2.00"/>
<line x1="416.00" y1="887.50" x2="416.00" y2="896.50" stroke="#dcdcdc" stroke-width="2.00"/>
<line x1="436.67" y1="887.50" x2="436.67" y2="896.50" stroke="#dcdcdc" stroke-width="2.00"/>
<line x1="457.33" y1="887.50" x2="457.33" y2="896.50" stroke="#dcdcdc" stroke-width="2.00"/>
<line x1="478.00" y1="887.50" x2="478.00" y2="896.50" stroke="#dcdcdc" stroke-width="2.00"/>
<text x="54.33" y="919.00" font-size="21.08" fill="#e2e2e2" text-anchor="middle" stroke="#e2e2e2" stroke-width="0.45">0</text>
<text x="75.00" y="950.00" font-size="21.08" fill="#e2e2e2" text-anchor="middle" stroke="#e2e2e2" stroke-width="0.45">5</text>
<text x="95.67" y="919.00" font-size="21.08" fill="#e2e2e2" text-anchor="middle" stroke="#e2e2e2" stroke-width="0.45">10</text>
<text x="116.33" y="950.00" font-size="21.08" fill="#e2e2e2" text-anchor="middle" stroke="#e2e2e2" stroke-width="0.45">15</text>
<text x="137.00" y="919.00" font-size="21.08" fill="#e2e2e2" text-anchor="middle" stroke="#e2e2e2" stroke-width="0.45">20</text>
<text x="157.67" y="950.00" font-size="21.08" fill="#e2e2e2" text-anchor="middle" stroke="#e2e2e2" stroke-width="0.45">25</text>
<text x="178.33" y="919.00" font-size="21.08" fill="#e2e2e2" text-anchor="middle" stroke="#e2e2e2" stroke-width="0.45">30</text>
<text x="199.00" y="950.00" font-size="21.08" fill="#e2e2e2" text-anchor="middle" stroke="#e2e2e2" stroke-width="0.45">35</text>
<text x="219.67" y="919.00" font-size="21.08" fill="#e2e2e2" text-anchor="middle" stroke="#e2e2e2" stroke-width="0.45">40</text>
<text x="240.33" y="950.00" font-size="21.08" fill="#e2e2e2" text-anchor="middle" stroke="#e2e2e2" stroke-width="0.45">45</text>
<text x="261.00" y="919.00" font-size="21.08" fill="#e2e2e2" text-anchor="middle" stroke="#e2e2e2" stroke-width="0.45">50</text>
<text x="281.67" y="950.00" font-size="21.08" fill="#e2e2e2" text-anchor="middle" stroke="#e2e2e2" stroke-width="0.45">55</text>
<text x="302.33" y="919.00" font-size="21.08" fill="#e2e2e2" text-anchor="middle" stroke="#e2e2e2" stroke-width="0.45">60</text>
<text x="323.00" y="950.00" font-size="21.08" fill="#e2e2e2" text-anchor="middle" stroke="#e2e2e2" stroke-width="0.45">65</text>
<text x="343.67" y="919.00" font-size="21.08" fill="#e2e2e2" text-anchor="middle" stroke="#e2e2e2" stroke-width="0.45">70</text>
<text x="364.33" y="950.00" font-size="21.08" fill="#e2e2e2" text-anchor="middle" stroke="#e2e2e2" stroke-width="0.45">75</text>
<text x="385.00" y="919.00" font-size="21.08" fill="#e2e2e2" text-anchor="middle" stroke="#e2e2e2" stroke-width="0.45">80</text>
<text x="405.67" y="950.00" font-size="21.08" fill="#e2e2e2" text-anchor="middle" stroke="#e2e2e2" stroke-width="0.45">85</text>
<text x="426.33" y="919.00" font-size="21.08" fill="#e2e2e2" text-anchor="middle" stroke="#e2e2e2" stroke-width="0.45">90</text>
<text x="447.00" y="950.00" font-size="21.08" fill="#e2e2e2" text-anchor="middle" stroke="#e2e2e2" stroke-width="0.45">95</text>
<text x="467.67" y="919.00" font-size="21.08" fill="#e2e2e2" text-anchor="middle" stroke="#e2e2e2" stroke-width="0.45">100</text>
<text x="244.00" y="639.00" font-size="20.35" fill="#dedede" text-anchor="middle" textLength="56.0" lengthAdjust="spacingAndGlyphs" stroke="#dedede" stroke-width="0.45">DEITP</text>
<rect x="561.00" y="173.00" width="1281.00" height="330.00" fill="#252525"/>
<line x1="561.00" y1="469.80" x2="1842.00" y2="469.80" stroke="#a0a0a0" stroke-width="2.00"/>
<line x1="561.00" y1="403.80" x2="1842.00" y2="403.80" stroke="#a0a0a0" stroke-width="2.00"/>
<line x1="561.00" y1="338.60" x2="1842.00" y2="338.60" stroke="#a0a0a0" stroke-width="2.00"/>
<line x1="561.00" y1="271.90" x2="1842.00" y2="271.90" stroke="#a0a0a0" stroke-width="2.00"/>
<line x1="561.00" y1="205.50" x2="1842.00" y2="205.50" stroke="#a0a0a0" stroke-width="2.00"/>
<g clip-path="url(#clip173)">
<polyline points="561.00,337.50 625.05,337.50 689.10,337.50 753.15,337.50 817.20,337.50 881.25,337.50 945.30,338.60 1009.35,347.80 1073.40,354.40 1137.45,372.70 1201.50,389.30 1265.55,404.40 1329.60,411.60 1393.65,434.30 1457.70,452.90 1521.75,468.30 1585.80,474.20 1649.85,474.20 1713.90,473.70 1777.95,473.70 1842.00,476.90" fill="none" stroke="#e8141c" stroke-width="4.60" stroke-linejoin="round" stroke-linecap="butt"/>
<polyline points="561.00,337.50 625.05,337.50 689.10,337.50 753.15,337.50 817.20,337.50 881.25,341.20 945.30,347.80 1009.35,343.90 1073.40,341.20 1137.45,343.90 1201.50,346.80 1265.55,345.60 1329.60,337.90 1393.65,315.20 1457.70,291.80 1521.75,261.70 1585.80,263.90 1649.85,264.70 1713.90,265.70 1777.95,266.50 1842.00,251.90" fill="none" stroke="#0d7d0d" stroke-width="4.60" stroke-linejoin="round" stroke-linecap="butt"/>
<polyline points="561.00,337.00 625.05,337.00 689.10,337.00 753.15,337.00 817.20,334.70 881.25,332.00 945.30,322.90 1009.35,317.60 1073.40,315.00 1137.45,296.70 1201.50,273.80 1265.55,260.70 1329.60,261.20 1393.65,264.70 1457.70,269.20 1521.75,279.00 1585.80,272.40 1649.85,271.30 1713.90,270.50 1777.95,269.70 1842.00,282.00" fill="none" stroke="#0a0aee" stroke-width="4.60" stroke-linejoin="round" stroke-linecap="butt"/>
</g>
<rect x="561.00" y="173.00" width="1281.00" height="330.00" fill="none" stroke="#a0a0a0" stroke-width="2"/>
<line x1="552.00" y1="469.80" x2="561.00" y2="469.80" stroke="#dcdcdc" stroke-width="2.00"/>
<text x="551.50" y="478.30" font-size="21.08" fill="#e2e2e2" text-anchor="end" stroke="#e2e2e2" stroke-width="0.45">96</text>
<line x1="552.00" y1="403.80" x2="561.00" y2="403.80" stroke="#dcdcdc" stroke-width="2.00"/>
<text x="551.50" y="412.30" font-size="21.08" fill="#e2e2e2" text-anchor="end" stroke="#e2e2e2" stroke-width="0.45">98</text>
<line x1="552.00" y1="338.60" x2="561.00" y2="338.60" stroke="#dcdcdc" stroke-width="2.00"/>
<text x="551.50" y="347.10" font-size="21.08" fill="#e2e2e2" text-anchor="end" stroke="#e2e2e2" stroke-width="0.45">100</text>
<line x1="552.00" y1="271.90" x2="561.00" y2="271.90" stroke="#dcdcdc" stroke-width="2.00"/>
<text x="551.50" y="280.40" font-size="21.08" fill="#e2e2e2" text-anchor="end" stroke="#e2e2e2" stroke-width="0.45">102</text>
<line x1="552.00" y1="205.50" x2="561.00" y2="205.50" stroke="#dcdcdc" stroke-width="2.00"/>
<text x="551.50" y="214.00" font-size="21.08" fill="#e2e2e2" text-anchor="end" stroke="#e2e2e2" stroke-width="0.45">104</text>
<line x1="561.00" y1="503.00" x2="561.00" y2="512.00" stroke="#dcdcdc" stroke-width="2.00"/>
<text x="561.00" y="535.50" font-size="21.08" fill="#e2e2e2" text-anchor="middle" stroke="#e2e2e2" stroke-width="0.45">0</text>
<line x1="625.05" y1="503.00" x2="625.05" y2="512.00" stroke="#dcdcdc" stroke-width="2.00"/>
<text x="625.05" y="535.50" font-size="21.08" fill="#e2e2e2" text-anchor="middle" stroke="#e2e2e2" stroke-width="0.45">5</text>
<line x1="689.10" y1="503.00" x2="689.10" y2="512.00" stroke="#dcdcdc" stroke-width="2.00"/>
<text x="689.10" y="535.50" font-size="21.08" fill="#e2e2e2" text-anchor="middle" stroke="#e2e2e2" stroke-width="0.45">10</text>
<line x1="753.15" y1="503.00" x2="753.15" y2="512.00" stroke="#dcdcdc" stroke-width="2.00"/>
<text x="753.15" y="535.50" font-size="21.08" fill="#e2e2e2" text-anchor="middle" stroke="#e2e2e2" stroke-width="0.45">15</text>
<line x1="817.20" y1="503.00" x2="817.20" y2="512.00" stroke="#dcdcdc" stroke-width="2.00"/>
<text x="817.20" y="535.50" font-size="21.08" fill="#e2e2e2" text-anchor="middle" stroke="#e2e2e2" stroke-width="0.45">20</text>
<line x1="881.25" y1="503.00" x2="881.25" y2="512.00" stroke="#dcdcdc" stroke-width="2.00"/>
<text x="881.25" y="535.50" font-size="21.08" fill="#e2e2e2" text-anchor="middle" stroke="#e2e2e2" stroke-width="0.45">25</text>
<line x1="945.30" y1="503.00" x2="945.30" y2="512.00" stroke="#dcdcdc" stroke-width="2.00"/>
<text x="945.30" y="535.50" font-size="21.08" fill="#e2e2e2" text-anchor="middle" stroke="#e2e2e2" stroke-width="0.45">30</text>
<line x1="1009.35" y1="503.00" x2="1009.35" y2="512.00" stroke="#dcdcdc" stroke-width="2.00"/>
<text x="1009.35" y="535.50" font-size="21.08" fill="#e2e2e2" text-anchor="middle" stroke="#e2e2e2" stroke-width="0.45">35</text>
<line x1="1073.40" y1="503.00" x2="1073.40" y2="512.00" stroke="#dcdcdc" stroke-width="2.00"/>
<text x="1073.40" y="535.50" font-size="21.08" fill="#e2e2e2" text-anchor="middle" stroke="#e2e2e2" stroke-width="0.45">40</text>
<line x1="1137.45" y1="503.00" x2="1137.45" y2="512.00" stroke="#dcdcdc" stroke-width="2.00"/>
<text x="1137.45" y="535.50" font-size="21.08" fill="#e2e2e2" text-anchor="middle" stroke="#e2e2e2" stroke-width="0.45">45</text>
<line x1="1201.50" y1="503.00" x2="1201.50" y2="512.00" stroke="#dcdcdc" stroke-width="2.00"/>
<text x="1201.50" y="535.50" font-size="21.08" fill="#e2e2e2" text-anchor="middle" stroke="#e2e2e2" stroke-width="0.45">50</text>
<line x1="1265.55" y1="503.00" x2="1265.55" y2="512.00" stroke="#dcdcdc" stroke-width="2.00"/>
<text x="1265.55" y="535.50" font-size="21.08" fill="#e2e2e2" text-anchor="middle" stroke="#e2e2e2" stroke-width="0.45">55</text>
<line x1="1329.60" y1="503.00" x2="1329.60" y2="512.00" stroke="#dcdcdc" stroke-width="2.00"/>
<text x="1329.60" y="535.50" font-size="21.08" fill="#e2e2e2" text-anchor="middle" stroke="#e2e2e2" stroke-width="0.45">60</text>
<line x1="1393.65" y1="503.00" x2="1393.65" y2="512.00" stroke="#dcdcdc" stroke-width="2.00"/>
<text x="1393.65" y="535.50" font-size="21.08" fill="#e2e2e2" text-anchor="middle" stroke="#e2e2e2" stroke-width="0.45">65</text>
<line x1="1457.70" y1="503.00" x2="1457.70" y2="512.00" stroke="#dcdcdc" stroke-width="2.00"/>
<text x="1457.70" y="535.50" font-size="21.08" fill="#e2e2e2" text-anchor="middle" stroke="#e2e2e2" stroke-width="0.45">70</text>
<line x1="1521.75" y1="503.00" x2="1521.75" y2="512.00" stroke="#dcdcdc" stroke-width="2.00"/>
<text x="1521.75" y="535.50" font-size="21.08" fill="#e2e2e2" text-anchor="middle" stroke="#e2e2e2" stroke-width="0.45">75</text>
<line x1="1585.80" y1="503.00" x2="1585.80" y2="512.00" stroke="#dcdcdc" stroke-width="2.00"/>
<text x="1585.80" y="535.50" font-size="21.08" fill="#e2e2e2" text-anchor="middle" stroke="#e2e2e2" stroke-width="0.45">80</text>
<line x1="1649.85" y1="503.00" x2="1649.85" y2="512.00" stroke="#dcdcdc" stroke-width="2.00"/>
<text x="1649.85" y="535.50" font-size="21.08" fill="#e2e2e2" text-anchor="middle" stroke="#e2e2e2" stroke-width="0.45">85</text>
<line x1="1713.90" y1="503.00" x2="1713.90" y2="512.00" stroke="#dcdcdc" stroke-width="2.00"/>
<text x="1713.90" y="535.50" font-size="21.08" fill="#e2e2e2" text-anchor="middle" stroke="#e2e2e2" stroke-width="0.45">90</text>
<line x1="1777.95" y1="503.00" x2="1777.95" y2="512.00" stroke="#dcdcdc" stroke-width="2.00"/>
<text x="1777.95" y="535.50" font-size="21.08" fill="#e2e2e2" text-anchor="middle" stroke="#e2e2e2" stroke-width="0.45">95</text>
<line x1="1842.00" y1="503.00" x2="1842.00" y2="512.00" stroke="#dcdcdc" stroke-width="2.00"/>
<text x="1842.00" y="535.50" font-size="21.08" fill="#e2e2e2" text-anchor="middle" stroke="#e2e2e2" stroke-width="0.45">100</text>
<text x="913.50" y="156.00" font-size="28.34" fill="#f0eeee" text-anchor="start" textLength="442.0" lengthAdjust="spacingAndGlyphs" stroke="#f0eeee" stroke-width="0.45">RGB Balance, without Luminance</text>
<rect x="556.00" y="598.00" width="1286.00" height="319.50" fill="#252525"/>
<line x1="556.00" y1="677.90" x2="1842.00" y2="677.90" stroke="#a0a0a0" stroke-width="2.00"/>
<line x1="556.00" y1="756.80" x2="1842.00" y2="756.80" stroke="#a0a0a0" stroke-width="2.00"/>
<line x1="556.00" y1="837.40" x2="1842.00" y2="837.40" stroke="#a0a0a0" stroke-width="2.00"/>
<g clip-path="url(#clip598)">
<polyline points="556.00,757.50 620.30,757.50 684.60,757.50 748.90,757.50 813.20,757.50 877.50,760.70 941.80,766.50 1006.10,767.20 1070.40,768.70 1134.70,769.50 1199.00,771.10 1263.30,772.80 1327.60,775.20 1391.90,775.70 1456.20,771.60 1520.50,773.60 1584.80,778.00 1649.10,778.00 1713.40,778.00 1777.70,778.00 1842.00,776.50" fill="none" stroke="#e8141c" stroke-width="4.60" stroke-linejoin="round" stroke-linecap="butt"/>
<polyline points="556.00,757.50 620.30,757.50 684.60,757.50 748.90,757.50 813.20,757.80 877.50,763.00 941.80,767.40 1006.10,767.10 1070.40,765.80 1134.70,764.40 1199.00,765.50 1263.30,766.00 1327.60,766.30 1391.90,762.30 1456.20,754.20 1520.50,748.60 1584.80,750.30 1649.10,750.30 1713.40,750.30 1777.70,750.30 1842.00,748.90" fill="none" stroke="#0d7d0d" stroke-width="4.60" stroke-linejoin="round" stroke-linecap="butt"/>
<polyline points="556.00,757.00 620.30,757.00 684.60,757.00 748.90,757.00 813.20,757.80 877.50,760.70 941.80,763.00 1006.10,763.00 1070.40,762.30 1134.70,759.00 1199.00,756.50 1263.30,756.50 1327.60,757.10 1391.90,756.30 1456.20,750.20 1520.50,750.20 1584.80,753.20 1649.10,753.20 1713.40,753.20 1777.70,753.20 1842.00,753.20" fill="none" stroke="#0a0aee" stroke-width="4.60" stroke-linejoin="round" stroke-linecap="butt"/>
</g>
<rect x="556.00" y="598.00" width="1286.00" height="319.50" fill="none" stroke="#a0a0a0" stroke-width="2"/>
<line x1="547.00" y1="598.00" x2="556.00" y2="598.00" stroke="#dcdcdc" stroke-width="2.00"/>
<text x="546.50" y="606.50" font-size="21.08" fill="#e2e2e2" text-anchor="end" stroke="#e2e2e2" stroke-width="0.45">40</text>
<line x1="547.00" y1="677.90" x2="556.00" y2="677.90" stroke="#dcdcdc" stroke-width="2.00"/>
<text x="546.50" y="686.40" font-size="21.08" fill="#e2e2e2" text-anchor="end" stroke="#e2e2e2" stroke-width="0.45">20</text>
<line x1="547.00" y1="756.80" x2="556.00" y2="756.80" stroke="#dcdcdc" stroke-width="2.00"/>
<text x="546.50" y="765.30" font-size="21.08" fill="#e2e2e2" text-anchor="end" stroke="#e2e2e2" stroke-width="0.45">0</text>
<line x1="547.00" y1="837.40" x2="556.00" y2="837.40" stroke="#dcdcdc" stroke-width="2.00"/>
<text x="546.50" y="845.90" font-size="21.08" fill="#e2e2e2" text-anchor="end" stroke="#e2e2e2" stroke-width="0.45">-20</text>
<line x1="547.00" y1="917.50" x2="556.00" y2="917.50" stroke="#dcdcdc" stroke-width="2.00"/>
<text x="546.50" y="926.00" font-size="21.08" fill="#e2e2e2" text-anchor="end" stroke="#e2e2e2" stroke-width="0.45">-40</text>
<line x1="556.00" y1="917.50" x2="556.00" y2="926.50" stroke="#dcdcdc" stroke-width="2.00"/>
<text x="556.00" y="949.20" font-size="21.08" fill="#e2e2e2" text-anchor="middle" stroke="#e2e2e2" stroke-width="0.45">0</text>
<line x1="620.30" y1="917.50" x2="620.30" y2="926.50" stroke="#dcdcdc" stroke-width="2.00"/>
<text x="620.30" y="949.20" font-size="21.08" fill="#e2e2e2" text-anchor="middle" stroke="#e2e2e2" stroke-width="0.45">5</text>
<line x1="684.60" y1="917.50" x2="684.60" y2="926.50" stroke="#dcdcdc" stroke-width="2.00"/>
<text x="684.60" y="949.20" font-size="21.08" fill="#e2e2e2" text-anchor="middle" stroke="#e2e2e2" stroke-width="0.45">10</text>
<line x1="748.90" y1="917.50" x2="748.90" y2="926.50" stroke="#dcdcdc" stroke-width="2.00"/>
<text x="748.90" y="949.20" font-size="21.08" fill="#e2e2e2" text-anchor="middle" stroke="#e2e2e2" stroke-width="0.45">15</text>
<line x1="813.20" y1="917.50" x2="813.20" y2="926.50" stroke="#dcdcdc" stroke-width="2.00"/>
<text x="813.20" y="949.20" font-size="21.08" fill="#e2e2e2" text-anchor="middle" stroke="#e2e2e2" stroke-width="0.45">20</text>
<line x1="877.50" y1="917.50" x2="877.50" y2="926.50" stroke="#dcdcdc" stroke-width="2.00"/>
<text x="877.50" y="949.20" font-size="21.08" fill="#e2e2e2" text-anchor="middle" stroke="#e2e2e2" stroke-width="0.45">25</text>
<line x1="941.80" y1="917.50" x2="941.80" y2="926.50" stroke="#dcdcdc" stroke-width="2.00"/>
<text x="941.80" y="949.20" font-size="21.08" fill="#e2e2e2" text-anchor="middle" stroke="#e2e2e2" stroke-width="0.45">30</text>
<line x1="1006.10" y1="917.50" x2="1006.10" y2="926.50" stroke="#dcdcdc" stroke-width="2.00"/>
<text x="1006.10" y="949.20" font-size="21.08" fill="#e2e2e2" text-anchor="middle" stroke="#e2e2e2" stroke-width="0.45">35</text>
<line x1="1070.40" y1="917.50" x2="1070.40" y2="926.50" stroke="#dcdcdc" stroke-width="2.00"/>
<text x="1070.40" y="949.20" font-size="21.08" fill="#e2e2e2" text-anchor="middle" stroke="#e2e2e2" stroke-width="0.45">40</text>
<line x1="1134.70" y1="917.50" x2="1134.70" y2="926.50" stroke="#dcdcdc" stroke-width="2.00"/>
<text x="1134.70" y="949.20" font-size="21.08" fill="#e2e2e2" text-anchor="middle" stroke="#e2e2e2" stroke-width="0.45">45</text>
<line x1="1199.00" y1="917.50" x2="1199.00" y2="926.50" stroke="#dcdcdc" stroke-width="2.00"/>
<text x="1199.00" y="949.20" font-size="21.08" fill="#e2e2e2" text-anchor="middle" stroke="#e2e2e2" stroke-width="0.45">50</text>
<line x1="1263.30" y1="917.50" x2="1263.30" y2="926.50" stroke="#dcdcdc" stroke-width="2.00"/>
<text x="1263.30" y="949.20" font-size="21.08" fill="#e2e2e2" text-anchor="middle" stroke="#e2e2e2" stroke-width="0.45">55</text>
<line x1="1327.60" y1="917.50" x2="1327.60" y2="926.50" stroke="#dcdcdc" stroke-width="2.00"/>
<text x="1327.60" y="949.20" font-size="21.08" fill="#e2e2e2" text-anchor="middle" stroke="#e2e2e2" stroke-width="0.45">60</text>
<line x1="1391.90" y1="917.50" x2="1391.90" y2="926.50" stroke="#dcdcdc" stroke-width="2.00"/>
<text x="1391.90" y="949.20" font-size="21.08" fill="#e2e2e2" text-anchor="middle" stroke="#e2e2e2" stroke-width="0.45">65</text>
<line x1="1456.20" y1="917.50" x2="1456.20" y2="926.50" stroke="#dcdcdc" stroke-width="2.00"/>
<text x="1456.20" y="949.20" font-size="21.08" fill="#e2e2e2" text-anchor="middle" stroke="#e2e2e2" stroke-width="0.45">70</text>
<line x1="1520.50" y1="917.50" x2="1520.50" y2="926.50" stroke="#dcdcdc" stroke-width="2.00"/>
<text x="1520.50" y="949.20" font-size="21.08" fill="#e2e2e2" text-anchor="middle" stroke="#e2e2e2" stroke-width="0.45">75</text>
<line x1="1584.80" y1="917.50" x2="1584.80" y2="926.50" stroke="#dcdcdc" stroke-width="2.00"/>
<text x="1584.80" y="949.20" font-size="21.08" fill="#e2e2e2" text-anchor="middle" stroke="#e2e2e2" stroke-width="0.45">80</text>
<line x1="1649.10" y1="917.50" x2="1649.10" y2="926.50" stroke="#dcdcdc" stroke-width="2.00"/>
<text x="1649.10" y="949.20" font-size="21.08" fill="#e2e2e2" text-anchor="middle" stroke="#e2e2e2" stroke-width="0.45">85</text>
<line x1="1713.40" y1="917.50" x2="1713.40" y2="926.50" stroke="#dcdcdc" stroke-width="2.00"/>
<text x="1713.40" y="949.20" font-size="21.08" fill="#e2e2e2" text-anchor="middle" stroke="#e2e2e2" stroke-width="0.45">90</text>
<line x1="1777.70" y1="917.50" x2="1777.70" y2="926.50" stroke="#dcdcdc" stroke-width="2.00"/>
<text x="1777.70" y="949.20" font-size="21.08" fill="#e2e2e2" text-anchor="middle" stroke="#e2e2e2" stroke-width="0.45">95</text>
<line x1="1842.00" y1="917.50" x2="1842.00" y2="926.50" stroke="#dcdcdc" stroke-width="2.00"/>
<text x="1842.00" y="949.20" font-size="21.08" fill="#e2e2e2" text-anchor="middle" stroke="#e2e2e2" stroke-width="0.45">100</text>
<text x="913.50" y="581.00" font-size="28.34" fill="#f0eeee" text-anchor="start" textLength="396.0" lengthAdjust="spacingAndGlyphs" stroke="#f0eeee" stroke-width="0.45">RGB Balance, with Luminance</text>
<rect x="1920.00" y="133.00" width="529.00" height="512.00" fill="#252525"/>
<line x1="1920.00" y1="583.00" x2="2449.00" y2="583.00" stroke="#a0a0a0" stroke-width="2.00"/>
<line x1="1920.00" y1="517.80" x2="2449.00" y2="517.80" stroke="#a0a0a0" stroke-width="2.00"/>
<line x1="1920.00" y1="453.00" x2="2449.00" y2="453.00" stroke="#a0a0a0" stroke-width="2.00"/>
<line x1="1920.00" y1="390.80" x2="2449.00" y2="390.80" stroke="#a0a0a0" stroke-width="2.00"/>
<line x1="1920.00" y1="325.90" x2="2449.00" y2="325.90" stroke="#a0a0a0" stroke-width="2.00"/>
<line x1="1920.00" y1="261.00" x2="2449.00" y2="261.00" stroke="#a0a0a0" stroke-width="2.00"/>
<line x1="1920.00" y1="199.00" x2="2449.00" y2="199.00" stroke="#a0a0a0" stroke-width="2.00"/>
<g clip-path="url(#eclip)">
<polyline points="1920.00,644.50 1946.45,627.70 1972.90,585.43 1999.35,554.12 2025.80,520.16 2052.25,489.13 2078.70,457.04 2105.15,424.74 2131.60,392.62 2158.05,359.44 2184.50,328.38 2210.95,296.02 2237.40,263.65 2263.85,232.56 2290.30,201.59 2316.75,167.98 2343.20,148.01 2369.65,148.01 2396.10,148.01 2422.55,148.01 2449.00,148.01" fill="none" stroke="#8c8c8c" stroke-width="4.50" stroke-linejoin="round"/>
<polyline points="1920.00,644.50 1922.64,641.40 1925.29,638.30 1927.93,635.20 1930.58,632.10 1933.22,629.00 1935.87,625.90 1938.52,622.80 1941.16,619.70 1943.81,616.60 1946.45,613.50 1949.10,610.40 1951.74,607.30 1954.38,604.20 1957.03,601.10 1959.67,598.00 1962.32,594.90 1964.96,591.80 1967.61,588.70 1970.26,585.60 1972.90,582.50 1975.55,579.24 1978.19,575.98 1980.84,572.72 1983.48,569.46 1986.12,566.20 1988.77,562.94 1991.41,559.68 1994.06,556.42 1996.70,553.16 1999.35,549.90 2001.99,546.64 2004.64,543.38 2007.29,540.12 2009.93,536.86 2012.58,533.60 2015.22,530.34 2017.87,527.08 2020.51,523.82 2023.15,520.56 2025.80,517.30 2028.44,514.06 2031.09,510.82 2033.73,507.58 2036.38,504.34 2039.03,501.10 2041.67,497.86 2044.32,494.62 2046.96,491.38 2049.61,488.14 2052.25,484.90 2054.89,481.66 2057.54,478.42 2060.18,475.18 2062.83,471.94 2065.47,468.70 2068.12,465.46 2070.76,462.22 2073.41,458.98 2076.05,455.74 2078.70,452.50 2081.34,449.39 2083.99,446.28 2086.64,443.17 2089.28,440.06 2091.93,436.95 2094.57,433.84 2097.22,430.73 2099.86,427.62 2102.51,424.51 2105.15,421.40 2107.80,418.29 2110.44,415.18 2113.09,412.07 2115.73,408.96 2118.38,405.85 2121.02,402.74 2123.66,399.63 2126.31,396.52 2128.95,393.41 2131.60,390.30 2134.24,387.06 2136.89,383.81 2139.53,380.57 2142.18,377.32 2144.82,374.08 2147.47,370.83 2150.11,367.59 2152.76,364.34 2155.41,361.10 2158.05,357.85 2160.70,354.61 2163.34,351.36 2165.99,348.12 2168.63,344.87 2171.28,341.62 2173.92,338.38 2176.57,335.13 2179.21,331.89 2181.86,328.64 2184.50,325.40 2187.14,322.15 2189.79,318.91 2192.43,315.66 2195.08,312.42 2197.72,309.17 2200.37,305.93 2203.01,302.68 2205.66,299.44 2208.30,296.19 2210.95,292.95 2213.60,289.70 2216.24,286.46 2218.89,283.22 2221.53,279.97 2224.18,276.73 2226.82,273.48 2229.47,270.24 2232.11,266.99 2234.76,263.75 2237.40,260.50 2240.05,257.40 2242.69,254.30 2245.34,251.20 2247.98,248.10 2250.62,245.00 2253.27,241.90 2255.91,238.80 2258.56,235.70 2261.20,232.60 2263.85,229.50 2266.49,226.40 2269.14,223.30 2271.78,220.20 2274.43,217.10 2277.07,214.00 2279.72,210.90 2282.36,207.80 2285.01,204.70 2287.65,201.60 2290.30,198.50 2292.95,195.20 2295.59,191.90 2298.24,188.60 2300.88,185.30 2303.53,182.00 2306.17,178.70 2308.82,175.40 2311.46,172.10 2314.11,168.80 2316.75,165.50 2319.39,162.20 2322.04,158.90 2324.68,155.60 2327.33,152.30 2329.97,149.00 2332.62,148.01 2335.26,148.01 2337.91,148.01 2340.55,148.01 2343.20,148.01 2345.85,148.01 2348.49,148.01 2351.14,148.01 2353.78,148.01 2356.43,148.01 2359.07,148.01 2361.72,148.01 2364.36,148.01 2367.01,148.01 2369.65,148.01 2372.30,148.01 2374.94,148.01 2377.59,148.01 2380.23,148.01 2382.88,148.01 2385.52,148.01 2388.16,148.01 2390.81,148.01 2393.45,148.01 2396.10,148.01 2398.74,148.01 2401.39,148.01 2404.03,148.01 2406.68,148.01 2409.32,148.01 2411.97,148.01 2414.61,148.01 2417.26,148.01 2419.90,148.01 2422.55,148.01 2425.20,148.01 2427.84,148.01 2430.49,148.01 2433.13,148.01 2435.78,148.01 2438.42,148.01 2441.07,148.01 2443.71,148.01 2446.36,148.01 2449.00,148.01" fill="none" stroke="#f4f01a" stroke-width="5.00" stroke-linejoin="round"/>
</g>
<rect x="1920.00" y="133.00" width="529.00" height="512.00" fill="none" stroke="#a0a0a0" stroke-width="2"/>
<line x1="1920.00" y1="132.20" x2="2449.00" y2="132.20" stroke="#a0a0a0" stroke-width="2.00"/>
<line x1="1911.00" y1="645.00" x2="1920.00" y2="645.00" stroke="#dcdcdc" stroke-width="2.00"/>
<text x="1909.50" y="653.50" font-size="21.08" fill="#e2e2e2" text-anchor="end" stroke="#e2e2e2" stroke-width="0.45">0</text>
<line x1="1911.00" y1="583.00" x2="1920.00" y2="583.00" stroke="#dcdcdc" stroke-width="2.00"/>
<text x="1909.50" y="591.50" font-size="21.08" fill="#e2e2e2" text-anchor="end" stroke="#e2e2e2" stroke-width="0.45">0.1</text>
<line x1="1911.00" y1="517.80" x2="1920.00" y2="517.80" stroke="#dcdcdc" stroke-width="2.00"/>
<text x="1909.50" y="526.30" font-size="21.08" fill="#e2e2e2" text-anchor="end" stroke="#e2e2e2" stroke-width="0.45">0.2</text>
<line x1="1911.00" y1="453.00" x2="1920.00" y2="453.00" stroke="#dcdcdc" stroke-width="2.00"/>
<text x="1909.50" y="461.50" font-size="21.08" fill="#e2e2e2" text-anchor="end" stroke="#e2e2e2" stroke-width="0.45">0.3</text>
<line x1="1911.00" y1="390.80" x2="1920.00" y2="390.80" stroke="#dcdcdc" stroke-width="2.00"/>
<text x="1909.50" y="399.30" font-size="21.08" fill="#e2e2e2" text-anchor="end" stroke="#e2e2e2" stroke-width="0.45">0.4</text>
<line x1="1911.00" y1="325.90" x2="1920.00" y2="325.90" stroke="#dcdcdc" stroke-width="2.00"/>
<text x="1909.50" y="334.40" font-size="21.08" fill="#e2e2e2" text-anchor="end" stroke="#e2e2e2" stroke-width="0.45">0.5</text>
<line x1="1911.00" y1="261.00" x2="1920.00" y2="261.00" stroke="#dcdcdc" stroke-width="2.00"/>
<text x="1909.50" y="269.50" font-size="21.08" fill="#e2e2e2" text-anchor="end" stroke="#e2e2e2" stroke-width="0.45">0.6</text>
<line x1="1911.00" y1="199.00" x2="1920.00" y2="199.00" stroke="#dcdcdc" stroke-width="2.00"/>
<text x="1909.50" y="207.50" font-size="21.08" fill="#e2e2e2" text-anchor="end" stroke="#e2e2e2" stroke-width="0.45">0.7</text>
<line x1="1911.00" y1="133.00" x2="1920.00" y2="133.00" stroke="#dcdcdc" stroke-width="2.00"/>
<text x="1909.50" y="141.50" font-size="21.08" fill="#e2e2e2" text-anchor="end" stroke="#e2e2e2" stroke-width="0.45">0.8</text>
<line x1="1920.00" y1="645.00" x2="1920.00" y2="653.50" stroke="#dcdcdc" stroke-width="2.00"/>
<text x="1920.00" y="677.00" font-size="21.08" fill="#e2e2e2" text-anchor="middle" stroke="#e2e2e2" stroke-width="0.45">0</text>
<line x1="2025.80" y1="645.00" x2="2025.80" y2="653.50" stroke="#dcdcdc" stroke-width="2.00"/>
<text x="2025.80" y="677.00" font-size="21.08" fill="#e2e2e2" text-anchor="middle" stroke="#e2e2e2" stroke-width="0.45">20</text>
<line x1="2131.60" y1="645.00" x2="2131.60" y2="653.50" stroke="#dcdcdc" stroke-width="2.00"/>
<text x="2131.60" y="677.00" font-size="21.08" fill="#e2e2e2" text-anchor="middle" stroke="#e2e2e2" stroke-width="0.45">40</text>
<line x1="2237.40" y1="645.00" x2="2237.40" y2="653.50" stroke="#dcdcdc" stroke-width="2.00"/>
<text x="2237.40" y="677.00" font-size="21.08" fill="#e2e2e2" text-anchor="middle" stroke="#e2e2e2" stroke-width="0.45">60</text>
<line x1="2343.20" y1="645.00" x2="2343.20" y2="653.50" stroke="#dcdcdc" stroke-width="2.00"/>
<text x="2343.20" y="677.00" font-size="21.08" fill="#e2e2e2" text-anchor="middle" stroke="#e2e2e2" stroke-width="0.45">80</text>
<line x1="2447.00" y1="645.00" x2="2447.00" y2="653.50" stroke="#dcdcdc" stroke-width="2.00"/>
<text x="2447.00" y="677.00" font-size="21.08" fill="#e2e2e2" text-anchor="middle" stroke="#e2e2e2" stroke-width="0.45">100</text>
<text x="2164.50" y="125.00" font-size="21.08" fill="#dedede" text-anchor="middle" textLength="49.0" lengthAdjust="spacingAndGlyphs" stroke="#dedede" stroke-width="0.45">EOTF</text>
<rect x="1938.00" y="729.00" width="511.00" height="512.30" fill="#252525"/>
<line x1="1938.00" y1="1190.80" x2="2449.00" y2="1190.80" stroke="#a0a0a0" stroke-width="2.00"/>
<line x1="1938.00" y1="1140.80" x2="2449.00" y2="1140.80" stroke="#a0a0a0" stroke-width="2.00"/>
<line x1="1938.00" y1="1088.00" x2="2449.00" y2="1088.00" stroke="#a0a0a0" stroke-width="2.00"/>
<line x1="1938.00" y1="1038.10" x2="2449.00" y2="1038.10" stroke="#a0a0a0" stroke-width="2.00"/>
<line x1="1938.00" y1="986.90" x2="2449.00" y2="986.90" stroke="#a0a0a0" stroke-width="2.00"/>
<line x1="1938.00" y1="934.10" x2="2449.00" y2="934.10" stroke="#a0a0a0" stroke-width="2.00"/>
<line x1="1938.00" y1="884.10" x2="2449.00" y2="884.10" stroke="#a0a0a0" stroke-width="2.00"/>
<line x1="1938.00" y1="832.90" x2="2449.00" y2="832.90" stroke="#a0a0a0" stroke-width="2.00"/>
<line x1="1938.00" y1="780.60" x2="2449.00" y2="780.60" stroke="#a0a0a0" stroke-width="2.00"/>
<g clip-path="url(#lclip)">
<polyline points="1938.00,1239.30 1963.55,1239.30 1989.10,1239.27 2014.65,1239.21 2040.20,1239.07 2065.75,1238.83 2091.30,1238.37 2116.85,1237.55 2142.40,1236.15 2167.95,1233.85 2193.50,1230.40 2219.05,1224.73 2244.60,1215.76 2270.15,1201.63 2295.70,1179.51 2321.25,1143.80 2346.80,1118.32 2372.35,1118.32 2397.90,1118.32 2423.45,1118.32 2449.00,1118.32" fill="none" stroke="#8c8c8c" stroke-width="4.50" stroke-linejoin="round"/>
<polyline points="1938.00,1239.30 1940.56,1239.30 1943.11,1239.30 1945.66,1239.30 1948.22,1239.30 1950.78,1239.30 1953.33,1239.30 1955.88,1239.30 1958.44,1239.30 1960.99,1239.30 1963.55,1239.29 1966.11,1239.29 1968.66,1239.29 1971.21,1239.29 1973.77,1239.29 1976.33,1239.28 1978.88,1239.28 1981.43,1239.28 1983.99,1239.28 1986.55,1239.27 1989.10,1239.27 1991.65,1239.26 1994.21,1239.26 1996.77,1239.25 1999.32,1239.25 2001.88,1239.24 2004.43,1239.23 2006.98,1239.23 2009.54,1239.22 2012.10,1239.21 2014.65,1239.20 2017.20,1239.19 2019.76,1239.18 2022.32,1239.17 2024.87,1239.15 2027.42,1239.14 2029.98,1239.12 2032.54,1239.11 2035.09,1239.09 2037.64,1239.07 2040.20,1239.05 2042.76,1239.03 2045.31,1239.01 2047.87,1238.99 2050.42,1238.96 2052.97,1238.94 2055.53,1238.91 2058.09,1238.88 2060.64,1238.85 2063.20,1238.82 2065.75,1238.78 2068.30,1238.74 2070.86,1238.70 2073.41,1238.66 2075.97,1238.61 2078.53,1238.57 2081.08,1238.52 2083.64,1238.46 2086.19,1238.41 2088.74,1238.35 2091.30,1238.29 2093.86,1238.22 2096.41,1238.15 2098.97,1238.08 2101.52,1238.00 2104.07,1237.92 2106.63,1237.83 2109.18,1237.74 2111.74,1237.65 2114.30,1237.54 2116.85,1237.44 2119.41,1237.33 2121.96,1237.21 2124.51,1237.09 2127.07,1236.96 2129.62,1236.82 2132.18,1236.67 2134.74,1236.52 2137.29,1236.36 2139.84,1236.20 2142.40,1236.02 2144.95,1235.84 2147.51,1235.65 2150.07,1235.44 2152.62,1235.23 2155.18,1235.01 2157.73,1234.77 2160.28,1234.52 2162.84,1234.26 2165.39,1233.99 2167.95,1233.71 2170.51,1233.41 2173.06,1233.10 2175.61,1232.77 2178.17,1232.43 2180.72,1232.06 2183.28,1231.69 2185.84,1231.29 2188.39,1230.87 2190.95,1230.44 2193.50,1229.98 2196.05,1229.51 2198.61,1229.00 2201.16,1228.48 2203.72,1227.93 2206.28,1227.36 2208.83,1226.75 2211.39,1226.12 2213.94,1225.46 2216.49,1224.77 2219.05,1224.05 2221.61,1223.29 2224.16,1222.50 2226.72,1221.66 2229.27,1220.79 2231.82,1219.88 2234.38,1218.93 2236.93,1217.93 2239.49,1216.89 2242.05,1215.80 2244.60,1214.66 2247.15,1213.46 2249.71,1212.21 2252.26,1210.90 2254.82,1209.53 2257.38,1208.09 2259.93,1206.59 2262.49,1205.02 2265.04,1203.38 2267.60,1201.66 2270.15,1199.86 2272.70,1197.98 2275.26,1196.01 2277.82,1193.95 2280.37,1191.79 2282.93,1189.54 2285.48,1187.19 2288.03,1184.75 2290.59,1182.19 2293.14,1179.51 2295.70,1176.71 2298.26,1173.78 2300.81,1170.72 2303.36,1167.51 2305.92,1164.15 2308.47,1160.64 2311.03,1156.96 2313.59,1153.11 2316.14,1149.09 2318.70,1144.87 2321.25,1140.46 2323.80,1135.68 2326.36,1130.58 2328.91,1125.24 2331.47,1119.65 2334.03,1118.32 2336.58,1118.32 2339.14,1118.32 2341.69,1118.32 2344.24,1118.32 2346.80,1118.32 2349.36,1118.32 2351.91,1118.32 2354.47,1118.32 2357.02,1118.32 2359.57,1118.32 2362.13,1118.32 2364.68,1118.32 2367.24,1118.32 2369.80,1118.32 2372.35,1118.32 2374.90,1118.32 2377.46,1118.32 2380.01,1118.32 2382.57,1118.32 2385.12,1118.32 2387.68,1118.32 2390.24,1118.32 2392.79,1118.32 2395.35,1118.32 2397.90,1118.32 2400.45,1118.32 2403.01,1118.32 2405.57,1118.32 2408.12,1118.32 2410.68,1118.32 2413.23,1118.32 2415.78,1118.32 2418.34,1118.32 2420.89,1118.32 2423.45,1118.32 2426.01,1118.32 2428.56,1118.32 2431.11,1118.32 2433.67,1118.32 2436.22,1118.32 2438.78,1118.32 2441.34,1118.32 2443.89,1118.32 2446.45,1118.32 2449.00,1118.32" fill="none" stroke="#f4f01a" stroke-width="5.00" stroke-linejoin="round"/>
</g>
<rect x="1938.00" y="729.00" width="511.00" height="512.30" fill="none" stroke="#a0a0a0" stroke-width="2"/>
<line x1="1938.00" y1="728.20" x2="2449.00" y2="728.20" stroke="#a0a0a0" stroke-width="2.00"/>
<line x1="1929.00" y1="1241.30" x2="1938.00" y2="1241.30" stroke="#dcdcdc" stroke-width="2.00"/>
<text x="1927.50" y="1253.30" font-size="21.08" fill="#e2e2e2" text-anchor="end" stroke="#e2e2e2" stroke-width="0.45">0</text>
<line x1="1929.00" y1="1190.80" x2="1938.00" y2="1190.80" stroke="#dcdcdc" stroke-width="2.00"/>
<text x="1927.50" y="1199.10" font-size="21.08" fill="#e2e2e2" text-anchor="end" stroke="#e2e2e2" stroke-width="0.45">500</text>
<line x1="1929.00" y1="1140.80" x2="1938.00" y2="1140.80" stroke="#dcdcdc" stroke-width="2.00"/>
<text x="1927.50" y="1149.10" font-size="21.08" fill="#e2e2e2" text-anchor="end" stroke="#e2e2e2" stroke-width="0.45">1000</text>
<line x1="1929.00" y1="1088.00" x2="1938.00" y2="1088.00" stroke="#dcdcdc" stroke-width="2.00"/>
<text x="1927.50" y="1096.30" font-size="21.08" fill="#e2e2e2" text-anchor="end" stroke="#e2e2e2" stroke-width="0.45">1500</text>
<line x1="1929.00" y1="1038.10" x2="1938.00" y2="1038.10" stroke="#dcdcdc" stroke-width="2.00"/>
<text x="1927.50" y="1046.40" font-size="21.08" fill="#e2e2e2" text-anchor="end" stroke="#e2e2e2" stroke-width="0.45">2000</text>
<line x1="1929.00" y1="986.90" x2="1938.00" y2="986.90" stroke="#dcdcdc" stroke-width="2.00"/>
<text x="1927.50" y="995.20" font-size="21.08" fill="#e2e2e2" text-anchor="end" stroke="#e2e2e2" stroke-width="0.45">2500</text>
<line x1="1929.00" y1="934.10" x2="1938.00" y2="934.10" stroke="#dcdcdc" stroke-width="2.00"/>
<text x="1927.50" y="942.40" font-size="21.08" fill="#e2e2e2" text-anchor="end" stroke="#e2e2e2" stroke-width="0.45">3000</text>
<line x1="1929.00" y1="884.10" x2="1938.00" y2="884.10" stroke="#dcdcdc" stroke-width="2.00"/>
<text x="1927.50" y="892.40" font-size="21.08" fill="#e2e2e2" text-anchor="end" stroke="#e2e2e2" stroke-width="0.45">3500</text>
<line x1="1929.00" y1="832.90" x2="1938.00" y2="832.90" stroke="#dcdcdc" stroke-width="2.00"/>
<text x="1927.50" y="841.20" font-size="21.08" fill="#e2e2e2" text-anchor="end" stroke="#e2e2e2" stroke-width="0.45">4000</text>
<line x1="1929.00" y1="780.60" x2="1938.00" y2="780.60" stroke="#dcdcdc" stroke-width="2.00"/>
<text x="1927.50" y="788.90" font-size="21.08" fill="#e2e2e2" text-anchor="end" stroke="#e2e2e2" stroke-width="0.45">4500</text>
<line x1="1929.00" y1="729.00" x2="1938.00" y2="729.00" stroke="#dcdcdc" stroke-width="2.00"/>
<text x="1927.50" y="737.30" font-size="21.08" fill="#e2e2e2" text-anchor="end" stroke="#e2e2e2" stroke-width="0.45">5000</text>
<line x1="1938.00" y1="1241.30" x2="1938.00" y2="1249.80" stroke="#dcdcdc" stroke-width="2.00"/>
<text x="1938.00" y="1273.30" font-size="21.08" fill="#e2e2e2" text-anchor="middle" stroke="#e2e2e2" stroke-width="0.45">0</text>
<line x1="2040.20" y1="1241.30" x2="2040.20" y2="1249.80" stroke="#dcdcdc" stroke-width="2.00"/>
<text x="2040.20" y="1273.30" font-size="21.08" fill="#e2e2e2" text-anchor="middle" stroke="#e2e2e2" stroke-width="0.45">20</text>
<line x1="2142.40" y1="1241.30" x2="2142.40" y2="1249.80" stroke="#dcdcdc" stroke-width="2.00"/>
<text x="2142.40" y="1273.30" font-size="21.08" fill="#e2e2e2" text-anchor="middle" stroke="#e2e2e2" stroke-width="0.45">40</text>
<line x1="2244.60" y1="1241.30" x2="2244.60" y2="1249.80" stroke="#dcdcdc" stroke-width="2.00"/>
<text x="2244.60" y="1273.30" font-size="21.08" fill="#e2e2e2" text-anchor="middle" stroke="#e2e2e2" stroke-width="0.45">60</text>
<line x1="2346.80" y1="1241.30" x2="2346.80" y2="1249.80" stroke="#dcdcdc" stroke-width="2.00"/>
<text x="2346.80" y="1273.30" font-size="21.08" fill="#e2e2e2" text-anchor="middle" stroke="#e2e2e2" stroke-width="0.45">80</text>
<line x1="2447.00" y1="1241.30" x2="2447.00" y2="1249.80" stroke="#dcdcdc" stroke-width="2.00"/>
<text x="2447.00" y="1273.30" font-size="21.08" fill="#e2e2e2" text-anchor="middle" stroke="#e2e2e2" stroke-width="0.45">100</text>
<text x="2164.50" y="721.00" font-size="21.08" fill="#dedede" text-anchor="middle" textLength="106.0" lengthAdjust="spacingAndGlyphs" stroke="#dedede" stroke-width="0.45">Luminance</text>
<rect x="1454.00" y="982.00" width="388.00" height="267.00" fill="#252525"/>
<line x1="1454.00" y1="1003.70" x2="1842.00" y2="1003.70" stroke="#a0a0a0" stroke-width="2.00"/>
<line x1="1454.00" y1="1114.90" x2="1842.00" y2="1114.90" stroke="#a0a0a0" stroke-width="2.00"/>
<line x1="1454.00" y1="1226.10" x2="1842.00" y2="1226.10" stroke="#a0a0a0" stroke-width="2.00"/>
<rect x="1491.50" y="1115.50" width="102.50" height="112.00" fill="#000000"/>
<rect x="1493.50" y="1117.50" width="98.50" height="107.00" fill="url(#rg)"/>
<rect x="1594.50" y="1076.50" width="102.00" height="41.00" fill="#000000"/>
<rect x="1596.50" y="1078.50" width="98.00" height="37.00" fill="url(#gg)"/>
<rect x="1697.00" y="1096.20" width="103.00" height="21.30" fill="#000000"/>
<rect x="1699.00" y="1098.20" width="99.00" height="17.30" fill="url(#bbg)"/>
<rect x="1454.00" y="982.00" width="388.00" height="267.00" fill="none" stroke="#a0a0a0" stroke-width="2"/>
<line x1="1445.00" y1="1003.70" x2="1454.00" y2="1003.70" stroke="#dcdcdc" stroke-width="2.00"/>
<text x="1444.50" y="1011.70" font-size="21.08" fill="#e2e2e2" text-anchor="end" stroke="#e2e2e2" stroke-width="0.45">5</text>
<line x1="1445.00" y1="1114.90" x2="1454.00" y2="1114.90" stroke="#dcdcdc" stroke-width="2.00"/>
<text x="1444.50" y="1122.90" font-size="21.08" fill="#e2e2e2" text-anchor="end" stroke="#e2e2e2" stroke-width="0.45">0</text>
<line x1="1445.00" y1="1226.10" x2="1454.00" y2="1226.10" stroke="#dcdcdc" stroke-width="2.00"/>
<text x="1444.50" y="1234.10" font-size="21.08" fill="#e2e2e2" text-anchor="end" stroke="#e2e2e2" stroke-width="0.45">-5</text>
<line x1="1454.00" y1="1249.00" x2="1454.00" y2="1259.00" stroke="#dcdcdc" stroke-width="2.00"/>
<line x1="1842.00" y1="1249.00" x2="1842.00" y2="1259.00" stroke="#dcdcdc" stroke-width="2.00"/>
<text x="1647.00" y="1272.50" font-size="21.08" fill="#e2e2e2" text-anchor="middle" stroke="#e2e2e2" stroke-width="0.45">100</text>
<text x="22.50" y="1015.00" font-size="29.07" fill="#f0eeee" text-anchor="start" textLength="225.0" lengthAdjust="spacingAndGlyphs" stroke="#f0eeee" stroke-width="0.45">Current Reading:</text>
<text x="22.50" y="1074.50" font-size="36.34" fill="#f4f2f0" text-anchor="start" textLength="151.0" lengthAdjust="spacingAndGlyphs" stroke="#f4f2f0" stroke-width="0.45">x: 0.3065</text>
<text x="22.50" y="1134.50" font-size="36.34" fill="#f4f2f0" text-anchor="start" textLength="153.0" lengthAdjust="spacingAndGlyphs" stroke="#f4f2f0" stroke-width="0.45">y: 0.3306</text>
<text x="22.50" y="1195.00" font-size="36.34" fill="#f4f2f0" text-anchor="start" textLength="163.0" lengthAdjust="spacingAndGlyphs" stroke="#f4f2f0" stroke-width="0.45">fL: 348.47</text>
<text x="22.50" y="1255.50" font-size="36.34" fill="#f4f2f0" text-anchor="start" textLength="256.0" lengthAdjust="spacingAndGlyphs" stroke="#f4f2f0" stroke-width="0.45">cd/m²: 1193.95</text>
<rect x="368.00" y="966.00" width="20.00" height="42.00" fill="#000000"/>
<rect x="388.00" y="966.00" width="1017.00" height="21.00" fill="#2d2d2d"/>
<rect x="388.00" y="987.00" width="1017.00" height="21.00" fill="#121212"/>
<g clip-path="url(#tclip)">
<text x="574.50" y="996.30" font-size="21.51" fill="#f4f4f4" text-anchor="start" stroke="#f4f4f4" stroke-width="0.45">0</text>
<text x="651.30" y="996.30" font-size="21.51" fill="#f4f4f4" text-anchor="start" stroke="#f4f4f4" stroke-width="0.45">5</text>
<text x="728.00" y="996.30" font-size="21.51" fill="#f4f4f4" text-anchor="start" stroke="#f4f4f4" stroke-width="0.45">10</text>
<text x="804.80" y="996.30" font-size="21.51" fill="#f4f4f4" text-anchor="start" stroke="#f4f4f4" stroke-width="0.45">15</text>
<text x="881.80" y="996.30" font-size="21.51" fill="#f4f4f4" text-anchor="start" stroke="#f4f4f4" stroke-width="0.45">20</text>
<text x="958.80" y="996.30" font-size="21.51" fill="#f4f4f4" text-anchor="start" stroke="#f4f4f4" stroke-width="0.45">25</text>
<text x="1035.50" y="996.30" font-size="21.51" fill="#f4f4f4" text-anchor="start" stroke="#f4f4f4" stroke-width="0.45">30</text>
<text x="1127.30" y="996.30" font-size="21.51" fill="#f4f4f4" text-anchor="start" stroke="#f4f4f4" stroke-width="0.45">35</text>
<text x="1217.80" y="996.30" font-size="21.51" fill="#f4f4f4" text-anchor="start" stroke="#f4f4f4" stroke-width="0.45">40</text>
<text x="1309.00" y="996.30" font-size="21.51" fill="#f4f4f4" text-anchor="start" stroke="#f4f4f4" stroke-width="0.45">45</text>
<text x="1399.50" y="996.30" font-size="21.51" fill="#f4f4f4" text-anchor="start" stroke="#f4f4f4" stroke-width="0.45">50</text>
</g>
<rect x="368.00" y="1008.00" width="20.00" height="36.90" fill="#252525"/>
<rect x="388.00" y="1008.00" width="1017.00" height="36.90" fill="url(#rowd)"/>
<g clip-path="url(#tclip)">
<text x="394.00" y="1034.80" font-size="25.87" fill="#f2f0ee" text-anchor="start" textLength="16.5" lengthAdjust="spacingAndGlyphs" stroke="#f2f0ee" stroke-width="0.45">Y</text>
<text x="574.50" y="1034.80" font-size="25.87" fill="#f2f0ee" text-anchor="start" textLength="61.6" lengthAdjust="spacingAndGlyphs" stroke="#f2f0ee" stroke-width="0.45">0.000</text>
<text x="651.30" y="1034.80" font-size="25.87" fill="#f2f0ee" text-anchor="start" textLength="61.6" lengthAdjust="spacingAndGlyphs" stroke="#f2f0ee" stroke-width="0.45">0.016</text>
<text x="728.00" y="1034.80" font-size="25.87" fill="#f2f0ee" text-anchor="start" textLength="61.6" lengthAdjust="spacingAndGlyphs" stroke="#f2f0ee" stroke-width="0.45">0.286</text>
<text x="804.80" y="1034.80" font-size="25.87" fill="#f2f0ee" text-anchor="start" textLength="61.6" lengthAdjust="spacingAndGlyphs" stroke="#f2f0ee" stroke-width="0.45">0.880</text>
<text x="881.80" y="1034.80" font-size="25.87" fill="#f2f0ee" text-anchor="start" textLength="61.6" lengthAdjust="spacingAndGlyphs" stroke="#f2f0ee" stroke-width="0.45">2.262</text>
<text x="958.80" y="1034.80" font-size="25.87" fill="#f2f0ee" text-anchor="start" textLength="61.6" lengthAdjust="spacingAndGlyphs" stroke="#f2f0ee" stroke-width="0.45">4.698</text>
<text x="1035.50" y="1034.80" font-size="25.87" fill="#f2f0ee" text-anchor="start" textLength="61.6" lengthAdjust="spacingAndGlyphs" stroke="#f2f0ee" stroke-width="0.45">9.179</text>
<text x="1127.30" y="1034.80" font-size="25.87" fill="#f2f0ee" text-anchor="start" textLength="75.3" lengthAdjust="spacingAndGlyphs" stroke="#f2f0ee" stroke-width="0.45">17.308</text>
<text x="1217.80" y="1034.80" font-size="25.87" fill="#f2f0ee" text-anchor="start" textLength="75.3" lengthAdjust="spacingAndGlyphs" stroke="#f2f0ee" stroke-width="0.45">31.143</text>
<text x="1309.00" y="1034.80" font-size="25.87" fill="#f2f0ee" text-anchor="start" textLength="75.3" lengthAdjust="spacingAndGlyphs" stroke="#f2f0ee" stroke-width="0.45">53.958</text>
<text x="1399.50" y="1034.80" font-size="25.87" fill="#f2f0ee" text-anchor="start" textLength="75.3" lengthAdjust="spacingAndGlyphs" stroke="#f2f0ee" stroke-width="0.45">88.123</text>
</g>
<rect x="368.00" y="1044.90" width="20.00" height="36.90" fill="#1e1e1e"/>
<rect x="388.00" y="1044.90" width="1017.00" height="36.90" fill="url(#rowl)"/>
<g clip-path="url(#tclip)">
<text x="394.00" y="1071.52" font-size="25.87" fill="#f2f0ee" text-anchor="start" textLength="95.1" lengthAdjust="spacingAndGlyphs" stroke="#f2f0ee" stroke-width="0.45">x: CIE31</text>
<text x="574.50" y="1071.52" font-size="25.87" fill="#f2f0ee" text-anchor="start" textLength="61.6" lengthAdjust="spacingAndGlyphs" stroke="#f2f0ee" stroke-width="0.45">0.333</text>
<text x="651.30" y="1071.52" font-size="25.87" fill="#f2f0ee" text-anchor="start" textLength="61.6" lengthAdjust="spacingAndGlyphs" stroke="#f2f0ee" stroke-width="0.45">0.296</text>
<text x="728.00" y="1071.52" font-size="25.87" fill="#f2f0ee" text-anchor="start" textLength="61.6" lengthAdjust="spacingAndGlyphs" stroke="#f2f0ee" stroke-width="0.45">0.314</text>
<text x="804.80" y="1071.52" font-size="25.87" fill="#f2f0ee" text-anchor="start" textLength="61.6" lengthAdjust="spacingAndGlyphs" stroke="#f2f0ee" stroke-width="0.45">0.313</text>
<text x="881.80" y="1071.52" font-size="25.87" fill="#f2f0ee" text-anchor="start" textLength="61.6" lengthAdjust="spacingAndGlyphs" stroke="#f2f0ee" stroke-width="0.45">0.312</text>
<text x="958.80" y="1071.52" font-size="25.87" fill="#f2f0ee" text-anchor="start" textLength="61.6" lengthAdjust="spacingAndGlyphs" stroke="#f2f0ee" stroke-width="0.45">0.312</text>
<text x="1035.50" y="1071.52" font-size="25.87" fill="#f2f0ee" text-anchor="start" textLength="61.6" lengthAdjust="spacingAndGlyphs" stroke="#f2f0ee" stroke-width="0.45">0.312</text>
<text x="1127.30" y="1071.52" font-size="25.87" fill="#f2f0ee" text-anchor="start" textLength="61.6" lengthAdjust="spacingAndGlyphs" stroke="#f2f0ee" stroke-width="0.45">0.310</text>
<text x="1217.80" y="1071.52" font-size="25.87" fill="#f2f0ee" text-anchor="start" textLength="61.6" lengthAdjust="spacingAndGlyphs" stroke="#f2f0ee" stroke-width="0.45">0.310</text>
<text x="1309.00" y="1071.52" font-size="25.87" fill="#f2f0ee" text-anchor="start" textLength="61.6" lengthAdjust="spacingAndGlyphs" stroke="#f2f0ee" stroke-width="0.45">0.308</text>
<text x="1399.50" y="1071.52" font-size="25.87" fill="#f2f0ee" text-anchor="start" textLength="61.6" lengthAdjust="spacingAndGlyphs" stroke="#f2f0ee" stroke-width="0.45">0.308</text>
</g>
<rect x="368.00" y="1081.80" width="20.00" height="36.90" fill="#252525"/>
<rect x="388.00" y="1081.80" width="1017.00" height="36.90" fill="url(#rowd)"/>
<g clip-path="url(#tclip)">
<text x="394.00" y="1108.24" font-size="25.87" fill="#f2f0ee" text-anchor="start" textLength="95.1" lengthAdjust="spacingAndGlyphs" stroke="#f2f0ee" stroke-width="0.45">y: CIE31</text>
<text x="574.50" y="1108.24" font-size="25.87" fill="#f2f0ee" text-anchor="start" textLength="61.6" lengthAdjust="spacingAndGlyphs" stroke="#f2f0ee" stroke-width="0.45">0.333</text>
<text x="651.30" y="1108.24" font-size="25.87" fill="#f2f0ee" text-anchor="start" textLength="61.6" lengthAdjust="spacingAndGlyphs" stroke="#f2f0ee" stroke-width="0.45">0.289</text>
<text x="728.00" y="1108.24" font-size="25.87" fill="#f2f0ee" text-anchor="start" textLength="61.6" lengthAdjust="spacingAndGlyphs" stroke="#f2f0ee" stroke-width="0.45">0.325</text>
<text x="804.80" y="1108.24" font-size="25.87" fill="#f2f0ee" text-anchor="start" textLength="61.6" lengthAdjust="spacingAndGlyphs" stroke="#f2f0ee" stroke-width="0.45">0.326</text>
<text x="881.80" y="1108.24" font-size="25.87" fill="#f2f0ee" text-anchor="start" textLength="61.6" lengthAdjust="spacingAndGlyphs" stroke="#f2f0ee" stroke-width="0.45">0.325</text>
<text x="958.80" y="1108.24" font-size="25.87" fill="#f2f0ee" text-anchor="start" textLength="61.6" lengthAdjust="spacingAndGlyphs" stroke="#f2f0ee" stroke-width="0.45">0.326</text>
<text x="1035.50" y="1108.24" font-size="25.87" fill="#f2f0ee" text-anchor="start" textLength="61.6" lengthAdjust="spacingAndGlyphs" stroke="#f2f0ee" stroke-width="0.45">0.325</text>
<text x="1127.30" y="1108.24" font-size="25.87" fill="#f2f0ee" text-anchor="start" textLength="61.6" lengthAdjust="spacingAndGlyphs" stroke="#f2f0ee" stroke-width="0.45">0.326</text>
<text x="1217.80" y="1108.24" font-size="25.87" fill="#f2f0ee" text-anchor="start" textLength="61.6" lengthAdjust="spacingAndGlyphs" stroke="#f2f0ee" stroke-width="0.45">0.326</text>
<text x="1309.00" y="1108.24" font-size="25.87" fill="#f2f0ee" text-anchor="start" textLength="61.6" lengthAdjust="spacingAndGlyphs" stroke="#f2f0ee" stroke-width="0.45">0.325</text>
<text x="1399.50" y="1108.24" font-size="25.87" fill="#f2f0ee" text-anchor="start" textLength="61.6" lengthAdjust="spacingAndGlyphs" stroke="#f2f0ee" stroke-width="0.45">0.325</text>
</g>
<rect x="368.00" y="1118.70" width="20.00" height="36.90" fill="#1e1e1e"/>
<rect x="388.00" y="1118.70" width="1017.00" height="36.90" fill="url(#rowl)"/>
<g clip-path="url(#tclip)">
<text x="394.00" y="1144.96" font-size="25.87" fill="#f2f0ee" text-anchor="start" textLength="95.1" lengthAdjust="spacingAndGlyphs" stroke="#f2f0ee" stroke-width="0.45">Target Y</text>
<text x="574.50" y="1144.96" font-size="25.87" fill="#f2f0ee" text-anchor="start" textLength="61.6" lengthAdjust="spacingAndGlyphs" stroke="#f2f0ee" stroke-width="0.45">0.000</text>
<text x="651.30" y="1144.96" font-size="25.87" fill="#f2f0ee" text-anchor="start" textLength="61.6" lengthAdjust="spacingAndGlyphs" stroke="#f2f0ee" stroke-width="0.45">0.061</text>
<text x="728.00" y="1144.96" font-size="25.87" fill="#f2f0ee" text-anchor="start" textLength="61.6" lengthAdjust="spacingAndGlyphs" stroke="#f2f0ee" stroke-width="0.45">0.328</text>
<text x="804.80" y="1144.96" font-size="25.87" fill="#f2f0ee" text-anchor="start" textLength="61.6" lengthAdjust="spacingAndGlyphs" stroke="#f2f0ee" stroke-width="0.45">1.015</text>
<text x="881.80" y="1144.96" font-size="25.87" fill="#f2f0ee" text-anchor="start" textLength="61.6" lengthAdjust="spacingAndGlyphs" stroke="#f2f0ee" stroke-width="0.45">2.465</text>
<text x="958.80" y="1144.96" font-size="25.87" fill="#f2f0ee" text-anchor="start" textLength="61.6" lengthAdjust="spacingAndGlyphs" stroke="#f2f0ee" stroke-width="0.45">5.238</text>
<text x="1035.50" y="1144.96" font-size="25.87" fill="#f2f0ee" text-anchor="start" textLength="75.3" lengthAdjust="spacingAndGlyphs" stroke="#f2f0ee" stroke-width="0.45">10.214</text>
<text x="1127.30" y="1144.96" font-size="25.87" fill="#f2f0ee" text-anchor="start" textLength="75.3" lengthAdjust="spacingAndGlyphs" stroke="#f2f0ee" stroke-width="0.45">18.781</text>
<text x="1217.80" y="1144.96" font-size="25.87" fill="#f2f0ee" text-anchor="start" textLength="75.3" lengthAdjust="spacingAndGlyphs" stroke="#f2f0ee" stroke-width="0.45">33.104</text>
<text x="1309.00" y="1144.96" font-size="25.87" fill="#f2f0ee" text-anchor="start" textLength="75.3" lengthAdjust="spacingAndGlyphs" stroke="#f2f0ee" stroke-width="0.45">56.554</text>
<text x="1399.50" y="1144.96" font-size="25.87" fill="#f2f0ee" text-anchor="start" textLength="75.3" lengthAdjust="spacingAndGlyphs" stroke="#f2f0ee" stroke-width="0.45">92.246</text>
</g>
<rect x="368.00" y="1155.60" width="20.00" height="36.90" fill="#252525"/>
<rect x="388.00" y="1155.60" width="1017.00" height="36.90" fill="url(#rowd)"/>
<g clip-path="url(#tclip)">
<text x="394.00" y="1181.68" font-size="25.87" fill="#f2f0ee" text-anchor="start" textLength="166.7" lengthAdjust="spacingAndGlyphs" stroke="#f2f0ee" stroke-width="0.45">Target x:CIE31</text>
<text x="574.50" y="1181.68" font-size="25.87" fill="#f2f0ee" text-anchor="start" textLength="61.6" lengthAdjust="spacingAndGlyphs" stroke="#f2f0ee" stroke-width="0.45">0.313</text>
<text x="651.30" y="1181.68" font-size="25.87" fill="#f2f0ee" text-anchor="start" textLength="61.6" lengthAdjust="spacingAndGlyphs" stroke="#f2f0ee" stroke-width="0.45">0.313</text>
<text x="728.00" y="1181.68" font-size="25.87" fill="#f2f0ee" text-anchor="start" textLength="61.6" lengthAdjust="spacingAndGlyphs" stroke="#f2f0ee" stroke-width="0.45">0.313</text>
<text x="804.80" y="1181.68" font-size="25.87" fill="#f2f0ee" text-anchor="start" textLength="61.6" lengthAdjust="spacingAndGlyphs" stroke="#f2f0ee" stroke-width="0.45">0.313</text>
<text x="881.80" y="1181.68" font-size="25.87" fill="#f2f0ee" text-anchor="start" textLength="61.6" lengthAdjust="spacingAndGlyphs" stroke="#f2f0ee" stroke-width="0.45">0.313</text>
<text x="958.80" y="1181.68" font-size="25.87" fill="#f2f0ee" text-anchor="start" textLength="61.6" lengthAdjust="spacingAndGlyphs" stroke="#f2f0ee" stroke-width="0.45">0.313</text>
<text x="1035.50" y="1181.68" font-size="25.87" fill="#f2f0ee" text-anchor="start" textLength="61.6" lengthAdjust="spacingAndGlyphs" stroke="#f2f0ee" stroke-width="0.45">0.313</text>
<text x="1127.30" y="1181.68" font-size="25.87" fill="#f2f0ee" text-anchor="start" textLength="61.6" lengthAdjust="spacingAndGlyphs" stroke="#f2f0ee" stroke-width="0.45">0.313</text>
<text x="1217.80" y="1181.68" font-size="25.87" fill="#f2f0ee" text-anchor="start" textLength="61.6" lengthAdjust="spacingAndGlyphs" stroke="#f2f0ee" stroke-width="0.45">0.313</text>
<text x="1309.00" y="1181.68" font-size="25.87" fill="#f2f0ee" text-anchor="start" textLength="61.6" lengthAdjust="spacingAndGlyphs" stroke="#f2f0ee" stroke-width="0.45">0.313</text>
<text x="1399.50" y="1181.68" font-size="25.87" fill="#f2f0ee" text-anchor="start" textLength="61.6" lengthAdjust="spacingAndGlyphs" stroke="#f2f0ee" stroke-width="0.45">0.313</text>
</g>
<rect x="368.00" y="1192.50" width="20.00" height="36.90" fill="#1e1e1e"/>
<rect x="388.00" y="1192.50" width="1017.00" height="36.90" fill="url(#rowl)"/>
<g clip-path="url(#tclip)">
<text x="394.00" y="1218.40" font-size="25.87" fill="#f2f0ee" text-anchor="start" textLength="166.7" lengthAdjust="spacingAndGlyphs" stroke="#f2f0ee" stroke-width="0.45">Target y:CIE31</text>
<text x="574.50" y="1218.40" font-size="25.87" fill="#f2f0ee" text-anchor="start" textLength="61.6" lengthAdjust="spacingAndGlyphs" stroke="#f2f0ee" stroke-width="0.45">0.329</text>
<text x="651.30" y="1218.40" font-size="25.87" fill="#f2f0ee" text-anchor="start" textLength="61.6" lengthAdjust="spacingAndGlyphs" stroke="#f2f0ee" stroke-width="0.45">0.329</text>
<text x="728.00" y="1218.40" font-size="25.87" fill="#f2f0ee" text-anchor="start" textLength="61.6" lengthAdjust="spacingAndGlyphs" stroke="#f2f0ee" stroke-width="0.45">0.329</text>
<text x="804.80" y="1218.40" font-size="25.87" fill="#f2f0ee" text-anchor="start" textLength="61.6" lengthAdjust="spacingAndGlyphs" stroke="#f2f0ee" stroke-width="0.45">0.329</text>
<text x="881.80" y="1218.40" font-size="25.87" fill="#f2f0ee" text-anchor="start" textLength="61.6" lengthAdjust="spacingAndGlyphs" stroke="#f2f0ee" stroke-width="0.45">0.329</text>
<text x="958.80" y="1218.40" font-size="25.87" fill="#f2f0ee" text-anchor="start" textLength="61.6" lengthAdjust="spacingAndGlyphs" stroke="#f2f0ee" stroke-width="0.45">0.329</text>
<text x="1035.50" y="1218.40" font-size="25.87" fill="#f2f0ee" text-anchor="start" textLength="61.6" lengthAdjust="spacingAndGlyphs" stroke="#f2f0ee" stroke-width="0.45">0.329</text>
<text x="1127.30" y="1218.40" font-size="25.87" fill="#f2f0ee" text-anchor="start" textLength="61.6" lengthAdjust="spacingAndGlyphs" stroke="#f2f0ee" stroke-width="0.45">0.329</text>
<text x="1217.80" y="1218.40" font-size="25.87" fill="#f2f0ee" text-anchor="start" textLength="61.6" lengthAdjust="spacingAndGlyphs" stroke="#f2f0ee" stroke-width="0.45">0.329</text>
<text x="1309.00" y="1218.40" font-size="25.87" fill="#f2f0ee" text-anchor="start" textLength="61.6" lengthAdjust="spacingAndGlyphs" stroke="#f2f0ee" stroke-width="0.45">0.329</text>
<text x="1399.50" y="1218.40" font-size="25.87" fill="#f2f0ee" text-anchor="start" textLength="61.6" lengthAdjust="spacingAndGlyphs" stroke="#f2f0ee" stroke-width="0.45">0.329</text>
</g>
<rect x="388.00" y="1229.40" width="1017.00" height="24.30" fill="#606060" rx="3"/>
<rect x="389.00" y="1229.40" width="1015.00" height="1.20" fill="#6e6e6e"/>
<rect x="389.80" y="1231.30" width="19.70" height="20.50" fill="#8a8a8a" rx="3"/>
<polygon points="396.8,1241.5 404,1232.5 404,1250.5" fill="#333333"/>
<rect x="414.00" y="1231.50" width="443.00" height="20.00" fill="#444444" rx="10"/>
<rect x="1382.70" y="1231.50" width="20.00" height="20.20" fill="#8a8a8a" rx="3"/>
<polygon points="1398.5,1241.5 1391,1232.5 1391,1250.5" fill="#333333"/>
</svg>
</body></html>
